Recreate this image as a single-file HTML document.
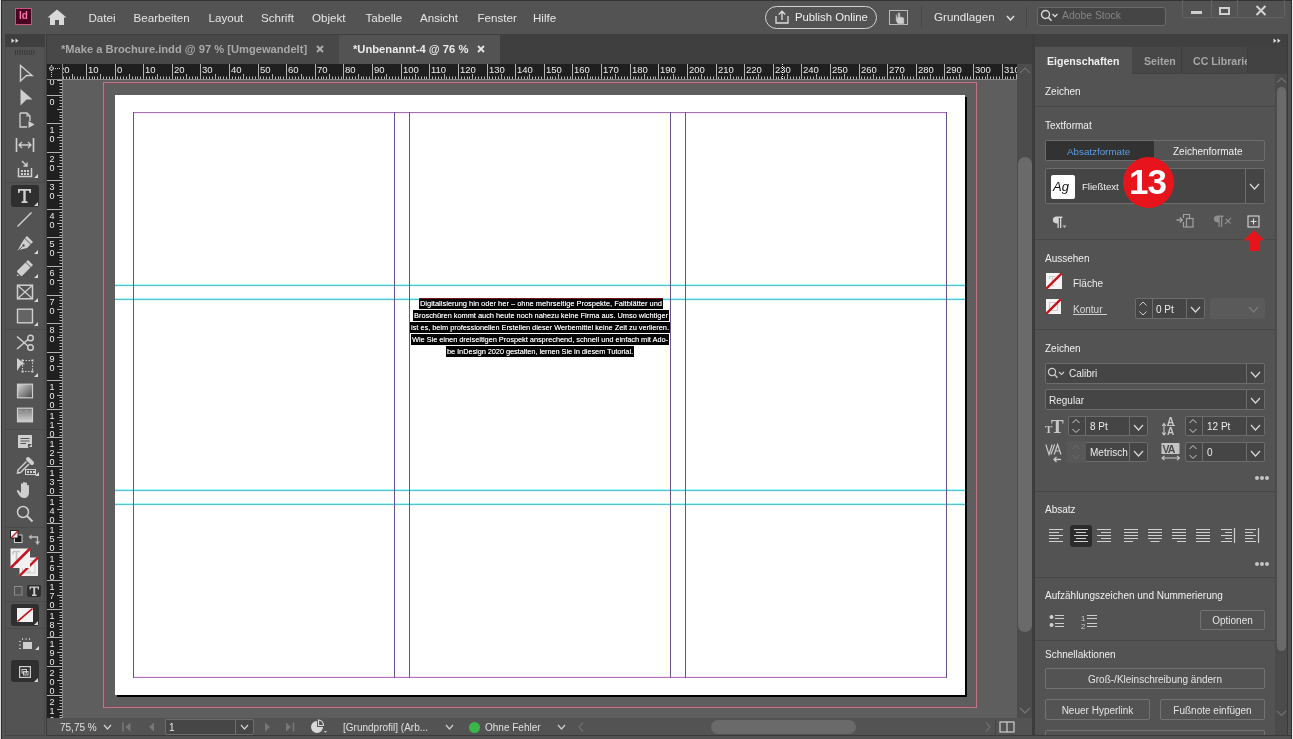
<!DOCTYPE html>
<html><head><meta charset="utf-8"><style>
*{box-sizing:border-box}
html,body{margin:0;padding:0}
body{width:1293px;height:739px;overflow:hidden;position:relative;will-change:transform;background:#535353;font-family:"Liberation Sans",sans-serif;color:#e8e8e8}
.a{position:absolute;display:block}
.t{position:absolute;white-space:nowrap;line-height:1}
.mi{position:absolute;top:11px;font-size:11.6px;color:#e6e6e6;white-space:nowrap;line-height:14px}
.sep{position:absolute;height:1px;background:#474747}
.lab{position:absolute;font-size:10px;color:#f0f0f0;white-space:nowrap;line-height:12px}
.fld{position:absolute;background:#454545;border:1px solid #6c6c6c;border-radius:2px}
.btn{position:absolute;border:1px solid #737373;border-radius:2px;font-size:10px;color:#e4e4e4;text-align:center;white-space:nowrap;padding-top:1px}
.chev{position:absolute}
</style></head>
<body>
<div class="a" style="left:0;top:0;width:1293px;height:34px;background:#535353"></div>
<div class="a" style="left:0;top:0;width:1293px;height:1px;background:#333"></div>
<div class="a" style="left:15px;top:8px;width:17px;height:17px;background:#49021f;border:1px solid #c9557f"></div>
<div class="t" style="left:19px;top:11px;font-size:10px;font-weight:bold;color:#ff77a8">Id</div>
<svg class="a" style="left:47px;top:9px" width="20" height="17" viewBox="0 0 20 17"><path d="M10 0.5 L19.5 8.5 L17 8.5 L17 16 L12 16 L12 11 L8 11 L8 16 L3 16 L3 8.5 L0.5 8.5 Z" fill="#d9d9d9"/></svg>
<div class="mi" style="left:88.5px">Datei</div>
<div class="mi" style="left:133.5px">Bearbeiten</div>
<div class="mi" style="left:208.5px">Layout</div>
<div class="mi" style="left:261px">Schrift</div>
<div class="mi" style="left:312px">Objekt</div>
<div class="mi" style="left:365.5px">Tabelle</div>
<div class="mi" style="left:420px">Ansicht</div>
<div class="mi" style="left:477.5px">Fenster</div>
<div class="mi" style="left:533px">Hilfe</div>
<div class="a" style="left:765px;top:6px;width:112px;height:23px;border:1.5px solid #d4d4d4;border-radius:12px"></div>
<svg class="a" style="left:775px;top:10px" width="14" height="14"><path d="M1 6V13H13V6" fill="none" stroke="#ddd" stroke-width="1.3"/><path d="M7 10V1.5M3.8 4.5L7 1.2L10.2 4.5" fill="none" stroke="#ddd" stroke-width="1.3"/></svg>
<div class="t" style="left:795px;top:12px;font-size:11.3px;color:#f0f0f0">Publish Online</div>
<svg class="a" style="left:889px;top:10px" width="19" height="15"><rect x="0.5" y="0.5" width="18" height="14" fill="none" stroke="#bbb"/><path d="M7 4V11L9 14H15V8L13 7L11 7V3.5C11 2.5 9 2.5 9 3.5V8" fill="#cfcfcf" stroke="#8a8a8a" stroke-width="0.6"/></svg>
<div class="a" style="left:921px;top:6px;width:1px;height:22px;background:#474747"></div>
<div class="t" style="left:934px;top:11px;font-size:11.6px;color:#e6e6e6">Grundlagen</div>
<svg class="a" style="left:1006px;top:15px" width="9" height="6"><path d="M1 1L4.5 5L8 1" fill="none" stroke="#e0e0e0" stroke-width="1.5"/></svg>
<div class="a" style="left:1026px;top:7px;width:1px;height:21px;background:#474747"></div>
<div class="a" style="left:1037px;top:7px;width:129px;height:19px;background:#454545;border:1px solid #6a6a6a;border-radius:3px"></div>
<svg class="a" style="left:1040px;top:9px" width="22" height="14"><circle cx="5.5" cy="5.5" r="4" fill="none" stroke="#d8d8d8" stroke-width="1.4"/><path d="M8.5 8.5L11.5 11.8" stroke="#d8d8d8" stroke-width="1.6"/><path d="M12.5 5L15 7.5L17.5 5" fill="none" stroke="#d8d8d8" stroke-width="1.3"/></svg>
<div class="t" style="left:1062px;top:11px;font-size:10.4px;color:#858585">Adobe Stock</div>
<div class="a" style="left:1182px;top:-2px;width:103px;height:20px;border:1px solid #636363;border-radius:3px"></div>
<div class="a" style="left:1211px;top:0;width:1px;height:18px;background:#636363"></div>
<div class="a" style="left:1237px;top:0;width:1px;height:18px;background:#636363"></div>
<div class="a" style="left:1191px;top:11px;width:11px;height:3px;background:#cfcfcf"></div>
<div class="a" style="left:1219px;top:7px;width:11px;height:8px;border:2px solid #cfcfcf"></div>
<svg class="a" style="left:1255px;top:5px" width="12" height="11"><path d="M1.5 1L10.5 10M10.5 1L1.5 10" stroke="#d4d4d4" stroke-width="2"/></svg>
<div class="a" style="left:2px;top:34px;width:44px;height:702px;background:#535353"></div>
<div class="a" style="left:5px;top:34px;width:40px;height:13px;background:#3f3f3f"></div>
<svg class="a" style="left:11px;top:38px" width="9" height="6"><path d="M0.5 0.5L3.5 2.75L0.5 5ZM4.5 0.5L7.5 2.75L4.5 5Z" fill="#dcdcdc"/></svg>
<div class="a" style="left:5px;top:47px;width:40px;height:689px;border-left:1px solid #4a4a4a;border-right:1px solid #4a4a4a;border-bottom:1px solid #444"></div>
<svg class="a" style="left:14px;top:50px" width="22" height="5"><path d="M1.5 0V5" stroke="#3a3a3a" stroke-width="1"/><path d="M3.8 0V5" stroke="#3a3a3a" stroke-width="1"/><path d="M6.1 0V5" stroke="#3a3a3a" stroke-width="1"/><path d="M8.399999999999999 0V5" stroke="#3a3a3a" stroke-width="1"/><path d="M10.7 0V5" stroke="#3a3a3a" stroke-width="1"/><path d="M13.0 0V5" stroke="#3a3a3a" stroke-width="1"/><path d="M15.299999999999999 0V5" stroke="#3a3a3a" stroke-width="1"/><path d="M17.599999999999998 0V5" stroke="#3a3a3a" stroke-width="1"/><path d="M19.9 0V5" stroke="#3a3a3a" stroke-width="1"/></svg>
<svg class="a" style="left:19px;top:64px" width="15" height="19"><path d="M1.5 1.5L13 11.5L7.5 11.5L1.5 17Z" fill="none" stroke="#cfcfcf" stroke-width="1.4" stroke-linejoin="miter"/></svg>
<svg class="a" style="left:19px;top:88px" width="15" height="19"><path d="M1.5 1L13.5 11.5L7.5 11.5L1.5 17.5Z" fill="#cfcfcf"/></svg>
<svg class="a" style="left:19px;top:112px" width="16" height="17"><path d="M1 1H8L11 4V9M1 1V15H8" fill="none" stroke="#cfcfcf" stroke-width="1.3"/><path d="M8 1V4H11" fill="none" stroke="#cfcfcf" stroke-width="1.1"/><path d="M9.5 9L15.5 12.5L9.5 16Z" fill="#cfcfcf"/></svg>
<svg class="a" style="left:15px;top:137px" width="20" height="16"><path d="M1.5 1V15M18.5 1V15" stroke="#cfcfcf" stroke-width="1.6"/><path d="M4 8H16M7 5L4 8L7 11M13 5L16 8L13 11" fill="none" stroke="#cfcfcf" stroke-width="1.3"/></svg>
<svg class="a" style="left:17px;top:160px" width="16" height="18"><path d="M5 1L10 6M10 2.5V6H6.5" fill="none" stroke="#cfcfcf" stroke-width="1.4"/><path d="M1.5 8V16.5H14.5V8" fill="none" stroke="#cfcfcf" stroke-width="1.5"/><rect x="4" y="10" width="2" height="2" fill="#cfcfcf"/><rect x="7" y="10" width="2" height="2" fill="#cfcfcf"/><rect x="10" y="10" width="2" height="2" fill="#cfcfcf"/><rect x="4" y="13" width="2" height="2" fill="#cfcfcf"/><rect x="7" y="13" width="2" height="2" fill="#cfcfcf"/><rect x="10" y="13" width="2" height="2" fill="#cfcfcf"/></svg>
<svg class="a" style="left:34px;top:174px" width="4" height="4"><path d="M4 0V4H0Z" fill="#d8d8d8"/></svg>
<div class="a" style="left:6px;top:182px;width:38px;height:1px;background:#4a4a4a"></div>
<div class="a" style="left:11px;top:185px;width:28px;height:22px;background:#2f2f2f;border-radius:3px"></div>
<svg class="a" style="left:17px;top:188px" width="15" height="16"><path d="M1 1H14V5H12.5L12 2.8H8.7V13.2H10.5V15H4.5V13.2H6.3V2.8H3L2.5 5H1Z" fill="#cfcfcf"/></svg>
<svg class="a" style="left:34px;top:202px" width="4" height="4"><path d="M4 0V4H0Z" fill="#d8d8d8"/></svg>
<svg class="a" style="left:16px;top:211px" width="17" height="17"><path d="M1.5 15.5L15.5 1.5" stroke="#cfcfcf" stroke-width="1.5"/></svg>
<svg class="a" style="left:16px;top:235px" width="18" height="18"><path d="M11 1L17 7L15 9L9 3Z" fill="#cfcfcf"/><path d="M8.5 3.5L14.5 9.5L11 13L3 15L1 17L5 9Z" fill="#cfcfcf"/><path d="M1 17L6.5 11.5" stroke="#535353" stroke-width="1"/><circle cx="7.5" cy="10.5" r="1.2" fill="#535353"/></svg>
<svg class="a" style="left:34px;top:250px" width="4" height="4"><path d="M4 0V4H0Z" fill="#d8d8d8"/></svg>
<svg class="a" style="left:16px;top:259px" width="18" height="18"><path d="M12 1L17 6L15 8L10 3Z" fill="#cfcfcf"/><path d="M9.5 3.5L14.5 8.5L6 17H1V12Z" fill="#cfcfcf"/><path d="M1 13V17H5Z" fill="#535353"/><path d="M1 15V17H3Z" fill="#cfcfcf"/></svg>
<svg class="a" style="left:34px;top:274px" width="4" height="4"><path d="M4 0V4H0Z" fill="#d8d8d8"/></svg>
<svg class="a" style="left:16px;top:284px" width="18" height="16"><rect x="1.5" y="1.2" width="15" height="13.6" fill="none" stroke="#cfcfcf" stroke-width="1.5"/><path d="M1.5 1.2L16.5 14.8M16.5 1.2L1.5 14.8" stroke="#cfcfcf" stroke-width="1.2"/></svg>
<svg class="a" style="left:34px;top:298px" width="4" height="4"><path d="M4 0V4H0Z" fill="#d8d8d8"/></svg>
<svg class="a" style="left:16px;top:308px" width="18" height="16"><rect x="1.5" y="1.2" width="15" height="13.6" fill="#646464" stroke="#cfcfcf" stroke-width="1.4"/></svg>
<svg class="a" style="left:34px;top:322px" width="4" height="4"><path d="M4 0V4H0Z" fill="#d8d8d8"/></svg>
<div class="a" style="left:6px;top:329px;width:38px;height:1px;background:#4a4a4a"></div>
<svg class="a" style="left:16px;top:334px" width="19" height="18"><circle cx="14.5" cy="4" r="2.8" fill="none" stroke="#cfcfcf" stroke-width="1.4"/><circle cx="14.5" cy="13.5" r="2.8" fill="none" stroke="#cfcfcf" stroke-width="1.4"/><path d="M1 2.5L12 12M1 15L12 5.5" stroke="#cfcfcf" stroke-width="1.6"/></svg>
<svg class="a" style="left:16px;top:357px" width="19" height="18"><path d="M1 1L9 7L5 8L1 14Z" fill="#cfcfcf"/><rect x="6.5" y="3.5" width="10" height="11" fill="none" stroke="#cfcfcf" stroke-width="1" stroke-dasharray="1.5 1.5"/><rect x="5.5" y="2.5" width="2" height="2" fill="#cfcfcf"/><rect x="15.5" y="2.5" width="2" height="2" fill="#cfcfcf"/><rect x="5.5" y="13.5" width="2" height="2" fill="#cfcfcf"/><rect x="15.5" y="13.5" width="2" height="2" fill="#cfcfcf"/></svg>
<svg class="a" style="left:34px;top:373px" width="4" height="4"><path d="M4 0V4H0Z" fill="#d8d8d8"/></svg>
<svg class="a" style="left:16px;top:383px" width="18" height="16"><defs><linearGradient id="g1" x1="0" y1="0" x2="1" y2="1"><stop offset="0" stop-color="#d8d8d8"/><stop offset="1" stop-color="#444"/></linearGradient></defs><rect x="1.5" y="1.2" width="15" height="13.6" fill="url(#g1)" stroke="#cfcfcf" stroke-width="1.2"/></svg>
<svg class="a" style="left:16px;top:407px" width="18" height="16"><defs><linearGradient id="g2" x1="0" y1="0" x2="0" y2="1"><stop offset="0" stop-color="#777"/><stop offset="1" stop-color="#d0d0d0"/></linearGradient></defs><rect x="1.5" y="1.2" width="15" height="13.6" fill="url(#g2)" stroke="#cfcfcf" stroke-width="1.2"/><rect x="3" y="3" width="3" height="2" fill="#999"/><rect x="9" y="3" width="3" height="2" fill="#999"/><rect x="6" y="5" width="3" height="2" fill="#999"/><rect x="12" y="5" width="3" height="2" fill="#999"/></svg>
<div class="a" style="left:6px;top:429px;width:38px;height:1px;background:#4a4a4a"></div>
<svg class="a" style="left:17px;top:434px" width="16" height="16"><path d="M1 1H15V10L11 14H1Z" fill="#cfcfcf"/><path d="M3.5 4.5H12.5M3.5 7H12.5M3.5 9.5H9" stroke="#535353" stroke-width="1.2"/><path d="M11 14L15 10H11Z" fill="#535353"/><path d="M12 13L15 10V13Z" fill="#cfcfcf"/></svg>
<svg class="a" style="left:16px;top:456px" width="22" height="21"><path d="M12 3L16 7" stroke="#cfcfcf" stroke-width="4" stroke-linecap="round"/><path d="M10.5 5.5L2 14L1.5 17L4.5 16.5L13 8" fill="none" stroke="#cfcfcf" stroke-width="1.5"/><rect x="9.5" y="13.5" width="10" height="5" fill="none" stroke="#cfcfcf" stroke-width="1"/><rect x="11" y="15" width="2" height="2" fill="#cfcfcf"/><rect x="14" y="15" width="2" height="2" fill="#cfcfcf"/><rect x="17" y="15" width="2" height="2" fill="#cfcfcf"/></svg>
<svg class="a" style="left:35px;top:472px" width="4" height="4"><path d="M4 0V4H0Z" fill="#d8d8d8"/></svg>
<svg class="a" style="left:16px;top:481px" width="18" height="18"><path d="M5 9V3.2C5 2 7 2 7 3.2V8V1.8C7 0.6 9 0.6 9 1.8V8V2.5C9 1.3 11 1.3 11 2.5V8.5V5C11 3.8 13 3.8 13 5V11C13 15 11 17 8 17C5.5 17 4.5 16 3 14L1 10.5C0.5 9.5 1.8 8.6 2.6 9.4L5 12Z" fill="#cfcfcf"/></svg>
<svg class="a" style="left:16px;top:505px" width="18" height="18"><circle cx="7" cy="7" r="5.5" fill="none" stroke="#cfcfcf" stroke-width="1.5"/><path d="M11 11L16.5 16.5" stroke="#cfcfcf" stroke-width="2"/></svg>
<div class="a" style="left:6px;top:527px;width:38px;height:1px;background:#4a4a4a"></div>
<svg class="a" style="left:10px;top:530px" width="13" height="14"><rect x="4.5" y="5" width="7.5" height="7.5" fill="#1a1a1a" stroke="#d0d0d0" stroke-width="1"/><rect x="0.5" y="0.5" width="7.5" height="7.5" fill="#f0f0f0" stroke="#222" stroke-width="1"/><path d="M1 8L8 1" stroke="#c8141c" stroke-width="1.2"/></svg>
<svg class="a" style="left:28px;top:533px" width="13" height="13"><path d="M2.5 4H9.5V10" fill="none" stroke="#bdbdbd" stroke-width="1.3"/><path d="M0.5 4L3.5 1.5V6.5Z" fill="#bdbdbd"/><path d="M7 8.5L9.5 12L12 8.5Z" fill="#bdbdbd"/></svg>
<svg class="a" style="left:19px;top:557px" width="20" height="20"><rect x="0.5" y="0.5" width="18.5" height="18.5" fill="#f2f2f2"/><rect x="3.5" y="3.5" width="12.5" height="12.5" fill="none" stroke="#cfcfcf" stroke-width="1"/><path d="M10 12V15M8 15H12" stroke="#cdcdcd" stroke-width="1"/><path d="M0.5 19L19 0.5" stroke="#c8141c" stroke-width="2.4"/></svg>
<svg class="a" style="left:10px;top:548px" width="21" height="21"><rect x="0.5" y="0.5" width="19.5" height="19.5" fill="#f2f2f2"/><path d="M3 3.5H10M3 3.5V6.5M6.5 3.5V15M5 15H8" fill="none" stroke="#c4c4c4" stroke-width="1.6"/><path d="M0.5 20L20 0.5" stroke="#c8141c" stroke-width="2.6"/></svg>
<svg class="a" style="left:14px;top:586px" width="9" height="10"><rect x="0.5" y="0.5" width="7.5" height="8.5" fill="none" stroke="#8a8a8a" stroke-width="1"/></svg>
<div class="a" style="left:27px;top:585px;width:14px;height:12px;background:#2f2f2f;border-radius:2px"></div>
<svg class="a" style="left:29px;top:586px" width="11" height="11"><path d="M0.5 0.5H10V3.5H9L8.6 1.8H6.2V8.6H7.5V10H3V8.6H4.3V1.8H2L1.5 3.5H0.5Z" fill="#cfcfcf"/></svg>
<div class="a" style="left:6px;top:601px;width:38px;height:1px;background:#4a4a4a"></div>
<div class="a" style="left:11px;top:604px;width:28px;height:22px;background:#2f2f2f;border-radius:3px"></div>
<svg class="a" style="left:17px;top:608px" width="16" height="14"><rect x="0" y="0" width="16" height="14" fill="#f2f2f2"/><path d="M0.5 13.5L15.5 0.5" stroke="#c8141c" stroke-width="1.6"/></svg>
<svg class="a" style="left:34px;top:621px" width="4" height="4"><path d="M4 0V4H0Z" fill="#d8d8d8"/></svg>
<div class="a" style="left:6px;top:628px;width:38px;height:1px;background:#4a4a4a"></div>
<svg class="a" style="left:18px;top:637px" width="15" height="13"><path d="M4.5 1V3M8 1V3M11.5 1V3M1 4.5H3M1 8H3M1 11.5H3" stroke="#bdbdbd" stroke-width="1"/><rect x="5" y="5" width="9" height="7" fill="#cfcfcf"/></svg>
<svg class="a" style="left:35px;top:646px" width="4" height="4"><path d="M4 0V4H0Z" fill="#d8d8d8"/></svg>
<div class="a" style="left:11px;top:660px;width:28px;height:22px;background:#2f2f2f;border-radius:3px"></div>
<svg class="a" style="left:19px;top:666px" width="12" height="12"><rect x="0.6" y="0.6" width="10.8" height="10.8" fill="none" stroke="#cfcfcf" stroke-width="1.2"/><rect x="3" y="3.5" width="4.5" height="3.5" fill="none" stroke="#cfcfcf" stroke-width="1"/><rect x="4.5" y="5.5" width="4.5" height="3.5" fill="none" stroke="#cfcfcf" stroke-width="1"/></svg>
<svg class="a" style="left:34px;top:678px" width="4" height="4"><path d="M4 0V4H0Z" fill="#d8d8d8"/></svg>
<div class="a" style="left:46px;top:34px;width:986px;height:30px;background:#3f3f3f"></div>
<div class="a" style="left:46px;top:34px;width:1px;height:702px;background:#3a3a3a"></div>
<div class="a" style="left:47px;top:35px;width:292px;height:29px;background:#484848"></div>
<div class="t" style="left:61px;top:44px;font-size:11.15px;font-weight:bold;color:#a9a9a9">*Make a Brochure.indd @ 97 % [Umgewandelt]</div>
<svg class="a" style="left:316px;top:45px" width="8" height="8"><path d="M1 1L7 7M7 1L1 7" stroke="#b0b0b0" stroke-width="1.8"/></svg>
<div class="a" style="left:339px;top:35px;width:161px;height:29px;background:#535353"></div>
<div class="t" style="left:353px;top:44px;font-size:11.2px;font-weight:bold;color:#ececec">*Unbenannt-4 @ 76 %</div>
<svg class="a" style="left:477px;top:45px" width="8" height="8"><path d="M1 1L7 7M7 1L1 7" stroke="#e6e6e6" stroke-width="1.8"/></svg>
<div class="a" style="left:47px;top:64px;width:970px;height:15px;background:#1f1f1f"></div>
<div class="a" style="left:47px;top:79px;width:15px;height:639px;background:#1f1f1f"></div>
<svg class="a" width="955" height="15" style="left:62px;top:64px"><path d="M-4.5 0V15" stroke="#b4b4b4"/><text x="-3.0" y="9" fill="#ececec" font-size="9.5" font-family="Liberation Sans">20</text><path d="M-1.5 12.5V15" stroke="#b4b4b4"/><path d="M1.5 12.5V15" stroke="#b4b4b4"/><path d="M4.5 12.5V15" stroke="#b4b4b4"/><path d="M7.5 12.5V15" stroke="#b4b4b4"/><path d="M10.5 10V15" stroke="#b4b4b4"/><path d="M12.5 12.5V15" stroke="#b4b4b4"/><path d="M15.5 12.5V15" stroke="#b4b4b4"/><path d="M18.5 12.5V15" stroke="#b4b4b4"/><path d="M21.5 12.5V15" stroke="#b4b4b4"/><path d="M24.5 0V15" stroke="#b4b4b4"/><text x="26.0" y="9" fill="#ececec" font-size="9.5" font-family="Liberation Sans">10</text><path d="M27.5 12.5V15" stroke="#b4b4b4"/><path d="M30.5 12.5V15" stroke="#b4b4b4"/><path d="M32.5 12.5V15" stroke="#b4b4b4"/><path d="M35.5 12.5V15" stroke="#b4b4b4"/><path d="M38.5 10V15" stroke="#b4b4b4"/><path d="M41.5 12.5V15" stroke="#b4b4b4"/><path d="M44.5 12.5V15" stroke="#b4b4b4"/><path d="M47.5 12.5V15" stroke="#b4b4b4"/><path d="M50.5 12.5V15" stroke="#b4b4b4"/><path d="M53.5 0V15" stroke="#b4b4b4"/><text x="55.0" y="9" fill="#ececec" font-size="9.5" font-family="Liberation Sans">0</text><path d="M55.5 12.5V15" stroke="#b4b4b4"/><path d="M58.5 12.5V15" stroke="#b4b4b4"/><path d="M61.5 12.5V15" stroke="#b4b4b4"/><path d="M64.5 12.5V15" stroke="#b4b4b4"/><path d="M67.5 10V15" stroke="#b4b4b4"/><path d="M70.5 12.5V15" stroke="#b4b4b4"/><path d="M73.5 12.5V15" stroke="#b4b4b4"/><path d="M75.5 12.5V15" stroke="#b4b4b4"/><path d="M78.5 12.5V15" stroke="#b4b4b4"/><path d="M81.5 0V15" stroke="#b4b4b4"/><text x="83.0" y="9" fill="#ececec" font-size="9.5" font-family="Liberation Sans">10</text><path d="M84.5 12.5V15" stroke="#b4b4b4"/><path d="M87.5 12.5V15" stroke="#b4b4b4"/><path d="M90.5 12.5V15" stroke="#b4b4b4"/><path d="M93.5 12.5V15" stroke="#b4b4b4"/><path d="M95.5 10V15" stroke="#b4b4b4"/><path d="M98.5 12.5V15" stroke="#b4b4b4"/><path d="M101.5 12.5V15" stroke="#b4b4b4"/><path d="M104.5 12.5V15" stroke="#b4b4b4"/><path d="M107.5 12.5V15" stroke="#b4b4b4"/><path d="M110.5 0V15" stroke="#b4b4b4"/><text x="112.0" y="9" fill="#ececec" font-size="9.5" font-family="Liberation Sans">20</text><path d="M113.5 12.5V15" stroke="#b4b4b4"/><path d="M115.5 12.5V15" stroke="#b4b4b4"/><path d="M118.5 12.5V15" stroke="#b4b4b4"/><path d="M121.5 12.5V15" stroke="#b4b4b4"/><path d="M124.5 10V15" stroke="#b4b4b4"/><path d="M127.5 12.5V15" stroke="#b4b4b4"/><path d="M130.5 12.5V15" stroke="#b4b4b4"/><path d="M133.5 12.5V15" stroke="#b4b4b4"/><path d="M135.5 12.5V15" stroke="#b4b4b4"/><path d="M138.5 0V15" stroke="#b4b4b4"/><text x="140.0" y="9" fill="#ececec" font-size="9.5" font-family="Liberation Sans">30</text><path d="M141.5 12.5V15" stroke="#b4b4b4"/><path d="M144.5 12.5V15" stroke="#b4b4b4"/><path d="M147.5 12.5V15" stroke="#b4b4b4"/><path d="M150.5 12.5V15" stroke="#b4b4b4"/><path d="M153.5 10V15" stroke="#b4b4b4"/><path d="M156.5 12.5V15" stroke="#b4b4b4"/><path d="M158.5 12.5V15" stroke="#b4b4b4"/><path d="M161.5 12.5V15" stroke="#b4b4b4"/><path d="M164.5 12.5V15" stroke="#b4b4b4"/><path d="M167.5 0V15" stroke="#b4b4b4"/><text x="169.0" y="9" fill="#ececec" font-size="9.5" font-family="Liberation Sans">40</text><path d="M170.5 12.5V15" stroke="#b4b4b4"/><path d="M173.5 12.5V15" stroke="#b4b4b4"/><path d="M176.5 12.5V15" stroke="#b4b4b4"/><path d="M178.5 12.5V15" stroke="#b4b4b4"/><path d="M181.5 10V15" stroke="#b4b4b4"/><path d="M184.5 12.5V15" stroke="#b4b4b4"/><path d="M187.5 12.5V15" stroke="#b4b4b4"/><path d="M190.5 12.5V15" stroke="#b4b4b4"/><path d="M193.5 12.5V15" stroke="#b4b4b4"/><path d="M196.5 0V15" stroke="#b4b4b4"/><text x="198.0" y="9" fill="#ececec" font-size="9.5" font-family="Liberation Sans">50</text><path d="M198.5 12.5V15" stroke="#b4b4b4"/><path d="M201.5 12.5V15" stroke="#b4b4b4"/><path d="M204.5 12.5V15" stroke="#b4b4b4"/><path d="M207.5 12.5V15" stroke="#b4b4b4"/><path d="M210.5 10V15" stroke="#b4b4b4"/><path d="M213.5 12.5V15" stroke="#b4b4b4"/><path d="M216.5 12.5V15" stroke="#b4b4b4"/><path d="M218.5 12.5V15" stroke="#b4b4b4"/><path d="M221.5 12.5V15" stroke="#b4b4b4"/><path d="M224.5 0V15" stroke="#b4b4b4"/><text x="226.0" y="9" fill="#ececec" font-size="9.5" font-family="Liberation Sans">60</text><path d="M227.5 12.5V15" stroke="#b4b4b4"/><path d="M230.5 12.5V15" stroke="#b4b4b4"/><path d="M233.5 12.5V15" stroke="#b4b4b4"/><path d="M236.5 12.5V15" stroke="#b4b4b4"/><path d="M239.5 10V15" stroke="#b4b4b4"/><path d="M241.5 12.5V15" stroke="#b4b4b4"/><path d="M244.5 12.5V15" stroke="#b4b4b4"/><path d="M247.5 12.5V15" stroke="#b4b4b4"/><path d="M250.5 12.5V15" stroke="#b4b4b4"/><path d="M253.5 0V15" stroke="#b4b4b4"/><text x="255.0" y="9" fill="#ececec" font-size="9.5" font-family="Liberation Sans">70</text><path d="M256.5 12.5V15" stroke="#b4b4b4"/><path d="M259.5 12.5V15" stroke="#b4b4b4"/><path d="M261.5 12.5V15" stroke="#b4b4b4"/><path d="M264.5 12.5V15" stroke="#b4b4b4"/><path d="M267.5 10V15" stroke="#b4b4b4"/><path d="M270.5 12.5V15" stroke="#b4b4b4"/><path d="M273.5 12.5V15" stroke="#b4b4b4"/><path d="M276.5 12.5V15" stroke="#b4b4b4"/><path d="M279.5 12.5V15" stroke="#b4b4b4"/><path d="M281.5 0V15" stroke="#b4b4b4"/><text x="283.0" y="9" fill="#ececec" font-size="9.5" font-family="Liberation Sans">80</text><path d="M284.5 12.5V15" stroke="#b4b4b4"/><path d="M287.5 12.5V15" stroke="#b4b4b4"/><path d="M290.5 12.5V15" stroke="#b4b4b4"/><path d="M293.5 12.5V15" stroke="#b4b4b4"/><path d="M296.5 10V15" stroke="#b4b4b4"/><path d="M299.5 12.5V15" stroke="#b4b4b4"/><path d="M301.5 12.5V15" stroke="#b4b4b4"/><path d="M304.5 12.5V15" stroke="#b4b4b4"/><path d="M307.5 12.5V15" stroke="#b4b4b4"/><path d="M310.5 0V15" stroke="#b4b4b4"/><text x="312.0" y="9" fill="#ececec" font-size="9.5" font-family="Liberation Sans">90</text><path d="M313.5 12.5V15" stroke="#b4b4b4"/><path d="M316.5 12.5V15" stroke="#b4b4b4"/><path d="M319.5 12.5V15" stroke="#b4b4b4"/><path d="M322.5 12.5V15" stroke="#b4b4b4"/><path d="M324.5 10V15" stroke="#b4b4b4"/><path d="M327.5 12.5V15" stroke="#b4b4b4"/><path d="M330.5 12.5V15" stroke="#b4b4b4"/><path d="M333.5 12.5V15" stroke="#b4b4b4"/><path d="M336.5 12.5V15" stroke="#b4b4b4"/><path d="M339.5 0V15" stroke="#b4b4b4"/><text x="341.0" y="9" fill="#ececec" font-size="9.5" font-family="Liberation Sans">100</text><path d="M342.5 12.5V15" stroke="#b4b4b4"/><path d="M344.5 12.5V15" stroke="#b4b4b4"/><path d="M347.5 12.5V15" stroke="#b4b4b4"/><path d="M350.5 12.5V15" stroke="#b4b4b4"/><path d="M353.5 10V15" stroke="#b4b4b4"/><path d="M356.5 12.5V15" stroke="#b4b4b4"/><path d="M359.5 12.5V15" stroke="#b4b4b4"/><path d="M362.5 12.5V15" stroke="#b4b4b4"/><path d="M364.5 12.5V15" stroke="#b4b4b4"/><path d="M367.5 0V15" stroke="#b4b4b4"/><text x="369.0" y="9" fill="#ececec" font-size="9.5" font-family="Liberation Sans">110</text><path d="M370.5 12.5V15" stroke="#b4b4b4"/><path d="M373.5 12.5V15" stroke="#b4b4b4"/><path d="M376.5 12.5V15" stroke="#b4b4b4"/><path d="M379.5 12.5V15" stroke="#b4b4b4"/><path d="M382.5 10V15" stroke="#b4b4b4"/><path d="M384.5 12.5V15" stroke="#b4b4b4"/><path d="M387.5 12.5V15" stroke="#b4b4b4"/><path d="M390.5 12.5V15" stroke="#b4b4b4"/><path d="M393.5 12.5V15" stroke="#b4b4b4"/><path d="M396.5 0V15" stroke="#b4b4b4"/><text x="398.0" y="9" fill="#ececec" font-size="9.5" font-family="Liberation Sans">120</text><path d="M399.5 12.5V15" stroke="#b4b4b4"/><path d="M402.5 12.5V15" stroke="#b4b4b4"/><path d="M405.5 12.5V15" stroke="#b4b4b4"/><path d="M407.5 12.5V15" stroke="#b4b4b4"/><path d="M410.5 10V15" stroke="#b4b4b4"/><path d="M413.5 12.5V15" stroke="#b4b4b4"/><path d="M416.5 12.5V15" stroke="#b4b4b4"/><path d="M419.5 12.5V15" stroke="#b4b4b4"/><path d="M422.5 12.5V15" stroke="#b4b4b4"/><path d="M425.5 0V15" stroke="#b4b4b4"/><text x="427.0" y="9" fill="#ececec" font-size="9.5" font-family="Liberation Sans">130</text><path d="M427.5 12.5V15" stroke="#b4b4b4"/><path d="M430.5 12.5V15" stroke="#b4b4b4"/><path d="M433.5 12.5V15" stroke="#b4b4b4"/><path d="M436.5 12.5V15" stroke="#b4b4b4"/><path d="M439.5 10V15" stroke="#b4b4b4"/><path d="M442.5 12.5V15" stroke="#b4b4b4"/><path d="M445.5 12.5V15" stroke="#b4b4b4"/><path d="M447.5 12.5V15" stroke="#b4b4b4"/><path d="M450.5 12.5V15" stroke="#b4b4b4"/><path d="M453.5 0V15" stroke="#b4b4b4"/><text x="455.0" y="9" fill="#ececec" font-size="9.5" font-family="Liberation Sans">140</text><path d="M456.5 12.5V15" stroke="#b4b4b4"/><path d="M459.5 12.5V15" stroke="#b4b4b4"/><path d="M462.5 12.5V15" stroke="#b4b4b4"/><path d="M465.5 12.5V15" stroke="#b4b4b4"/><path d="M467.5 10V15" stroke="#b4b4b4"/><path d="M470.5 12.5V15" stroke="#b4b4b4"/><path d="M473.5 12.5V15" stroke="#b4b4b4"/><path d="M476.5 12.5V15" stroke="#b4b4b4"/><path d="M479.5 12.5V15" stroke="#b4b4b4"/><path d="M482.5 0V15" stroke="#b4b4b4"/><text x="484.0" y="9" fill="#ececec" font-size="9.5" font-family="Liberation Sans">150</text><path d="M485.5 12.5V15" stroke="#b4b4b4"/><path d="M488.5 12.5V15" stroke="#b4b4b4"/><path d="M490.5 12.5V15" stroke="#b4b4b4"/><path d="M493.5 12.5V15" stroke="#b4b4b4"/><path d="M496.5 10V15" stroke="#b4b4b4"/><path d="M499.5 12.5V15" stroke="#b4b4b4"/><path d="M502.5 12.5V15" stroke="#b4b4b4"/><path d="M505.5 12.5V15" stroke="#b4b4b4"/><path d="M508.5 12.5V15" stroke="#b4b4b4"/><path d="M510.5 0V15" stroke="#b4b4b4"/><text x="512.0" y="9" fill="#ececec" font-size="9.5" font-family="Liberation Sans">160</text><path d="M513.5 12.5V15" stroke="#b4b4b4"/><path d="M516.5 12.5V15" stroke="#b4b4b4"/><path d="M519.5 12.5V15" stroke="#b4b4b4"/><path d="M522.5 12.5V15" stroke="#b4b4b4"/><path d="M525.5 10V15" stroke="#b4b4b4"/><path d="M528.5 12.5V15" stroke="#b4b4b4"/><path d="M530.5 12.5V15" stroke="#b4b4b4"/><path d="M533.5 12.5V15" stroke="#b4b4b4"/><path d="M536.5 12.5V15" stroke="#b4b4b4"/><path d="M539.5 0V15" stroke="#b4b4b4"/><text x="541.0" y="9" fill="#ececec" font-size="9.5" font-family="Liberation Sans">170</text><path d="M542.5 12.5V15" stroke="#b4b4b4"/><path d="M545.5 12.5V15" stroke="#b4b4b4"/><path d="M548.5 12.5V15" stroke="#b4b4b4"/><path d="M550.5 12.5V15" stroke="#b4b4b4"/><path d="M553.5 10V15" stroke="#b4b4b4"/><path d="M556.5 12.5V15" stroke="#b4b4b4"/><path d="M559.5 12.5V15" stroke="#b4b4b4"/><path d="M562.5 12.5V15" stroke="#b4b4b4"/><path d="M565.5 12.5V15" stroke="#b4b4b4"/><path d="M568.5 0V15" stroke="#b4b4b4"/><text x="570.0" y="9" fill="#ececec" font-size="9.5" font-family="Liberation Sans">180</text><path d="M571.5 12.5V15" stroke="#b4b4b4"/><path d="M573.5 12.5V15" stroke="#b4b4b4"/><path d="M576.5 12.5V15" stroke="#b4b4b4"/><path d="M579.5 12.5V15" stroke="#b4b4b4"/><path d="M582.5 10V15" stroke="#b4b4b4"/><path d="M585.5 12.5V15" stroke="#b4b4b4"/><path d="M588.5 12.5V15" stroke="#b4b4b4"/><path d="M591.5 12.5V15" stroke="#b4b4b4"/><path d="M593.5 12.5V15" stroke="#b4b4b4"/><path d="M596.5 0V15" stroke="#b4b4b4"/><text x="598.0" y="9" fill="#ececec" font-size="9.5" font-family="Liberation Sans">190</text><path d="M599.5 12.5V15" stroke="#b4b4b4"/><path d="M602.5 12.5V15" stroke="#b4b4b4"/><path d="M605.5 12.5V15" stroke="#b4b4b4"/><path d="M608.5 12.5V15" stroke="#b4b4b4"/><path d="M611.5 10V15" stroke="#b4b4b4"/><path d="M613.5 12.5V15" stroke="#b4b4b4"/><path d="M616.5 12.5V15" stroke="#b4b4b4"/><path d="M619.5 12.5V15" stroke="#b4b4b4"/><path d="M622.5 12.5V15" stroke="#b4b4b4"/><path d="M625.5 0V15" stroke="#b4b4b4"/><text x="627.0" y="9" fill="#ececec" font-size="9.5" font-family="Liberation Sans">200</text><path d="M628.5 12.5V15" stroke="#b4b4b4"/><path d="M631.5 12.5V15" stroke="#b4b4b4"/><path d="M633.5 12.5V15" stroke="#b4b4b4"/><path d="M636.5 12.5V15" stroke="#b4b4b4"/><path d="M639.5 10V15" stroke="#b4b4b4"/><path d="M642.5 12.5V15" stroke="#b4b4b4"/><path d="M645.5 12.5V15" stroke="#b4b4b4"/><path d="M648.5 12.5V15" stroke="#b4b4b4"/><path d="M651.5 12.5V15" stroke="#b4b4b4"/><path d="M654.5 0V15" stroke="#b4b4b4"/><text x="656.0" y="9" fill="#ececec" font-size="9.5" font-family="Liberation Sans">210</text><path d="M656.5 12.5V15" stroke="#b4b4b4"/><path d="M659.5 12.5V15" stroke="#b4b4b4"/><path d="M662.5 12.5V15" stroke="#b4b4b4"/><path d="M665.5 12.5V15" stroke="#b4b4b4"/><path d="M668.5 10V15" stroke="#b4b4b4"/><path d="M671.5 12.5V15" stroke="#b4b4b4"/><path d="M674.5 12.5V15" stroke="#b4b4b4"/><path d="M676.5 12.5V15" stroke="#b4b4b4"/><path d="M679.5 12.5V15" stroke="#b4b4b4"/><path d="M682.5 0V15" stroke="#b4b4b4"/><text x="684.0" y="9" fill="#ececec" font-size="9.5" font-family="Liberation Sans">220</text><path d="M685.5 12.5V15" stroke="#b4b4b4"/><path d="M688.5 12.5V15" stroke="#b4b4b4"/><path d="M691.5 12.5V15" stroke="#b4b4b4"/><path d="M694.5 12.5V15" stroke="#b4b4b4"/><path d="M696.5 10V15" stroke="#b4b4b4"/><path d="M699.5 12.5V15" stroke="#b4b4b4"/><path d="M702.5 12.5V15" stroke="#b4b4b4"/><path d="M705.5 12.5V15" stroke="#b4b4b4"/><path d="M708.5 12.5V15" stroke="#b4b4b4"/><path d="M711.5 0V15" stroke="#b4b4b4"/><text x="713.0" y="9" fill="#ececec" font-size="9.5" font-family="Liberation Sans">230</text><path d="M714.5 12.5V15" stroke="#b4b4b4"/><path d="M716.5 12.5V15" stroke="#b4b4b4"/><path d="M719.5 12.5V15" stroke="#b4b4b4"/><path d="M722.5 12.5V15" stroke="#b4b4b4"/><path d="M725.5 10V15" stroke="#b4b4b4"/><path d="M728.5 12.5V15" stroke="#b4b4b4"/><path d="M731.5 12.5V15" stroke="#b4b4b4"/><path d="M734.5 12.5V15" stroke="#b4b4b4"/><path d="M737.5 12.5V15" stroke="#b4b4b4"/><path d="M739.5 0V15" stroke="#b4b4b4"/><text x="741.0" y="9" fill="#ececec" font-size="9.5" font-family="Liberation Sans">240</text><path d="M742.5 12.5V15" stroke="#b4b4b4"/><path d="M745.5 12.5V15" stroke="#b4b4b4"/><path d="M748.5 12.5V15" stroke="#b4b4b4"/><path d="M751.5 12.5V15" stroke="#b4b4b4"/><path d="M754.5 10V15" stroke="#b4b4b4"/><path d="M757.5 12.5V15" stroke="#b4b4b4"/><path d="M759.5 12.5V15" stroke="#b4b4b4"/><path d="M762.5 12.5V15" stroke="#b4b4b4"/><path d="M765.5 12.5V15" stroke="#b4b4b4"/><path d="M768.5 0V15" stroke="#b4b4b4"/><text x="770.0" y="9" fill="#ececec" font-size="9.5" font-family="Liberation Sans">250</text><path d="M771.5 12.5V15" stroke="#b4b4b4"/><path d="M774.5 12.5V15" stroke="#b4b4b4"/><path d="M777.5 12.5V15" stroke="#b4b4b4"/><path d="M779.5 12.5V15" stroke="#b4b4b4"/><path d="M782.5 10V15" stroke="#b4b4b4"/><path d="M785.5 12.5V15" stroke="#b4b4b4"/><path d="M788.5 12.5V15" stroke="#b4b4b4"/><path d="M791.5 12.5V15" stroke="#b4b4b4"/><path d="M794.5 12.5V15" stroke="#b4b4b4"/><path d="M797.5 0V15" stroke="#b4b4b4"/><text x="799.0" y="9" fill="#ececec" font-size="9.5" font-family="Liberation Sans">260</text><path d="M799.5 12.5V15" stroke="#b4b4b4"/><path d="M802.5 12.5V15" stroke="#b4b4b4"/><path d="M805.5 12.5V15" stroke="#b4b4b4"/><path d="M808.5 12.5V15" stroke="#b4b4b4"/><path d="M811.5 10V15" stroke="#b4b4b4"/><path d="M814.5 12.5V15" stroke="#b4b4b4"/><path d="M817.5 12.5V15" stroke="#b4b4b4"/><path d="M820.5 12.5V15" stroke="#b4b4b4"/><path d="M822.5 12.5V15" stroke="#b4b4b4"/><path d="M825.5 0V15" stroke="#b4b4b4"/><text x="827.0" y="9" fill="#ececec" font-size="9.5" font-family="Liberation Sans">270</text><path d="M828.5 12.5V15" stroke="#b4b4b4"/><path d="M831.5 12.5V15" stroke="#b4b4b4"/><path d="M834.5 12.5V15" stroke="#b4b4b4"/><path d="M837.5 12.5V15" stroke="#b4b4b4"/><path d="M840.5 10V15" stroke="#b4b4b4"/><path d="M842.5 12.5V15" stroke="#b4b4b4"/><path d="M845.5 12.5V15" stroke="#b4b4b4"/><path d="M848.5 12.5V15" stroke="#b4b4b4"/><path d="M851.5 12.5V15" stroke="#b4b4b4"/><path d="M854.5 0V15" stroke="#b4b4b4"/><text x="856.0" y="9" fill="#ececec" font-size="9.5" font-family="Liberation Sans">280</text><path d="M857.5 12.5V15" stroke="#b4b4b4"/><path d="M860.5 12.5V15" stroke="#b4b4b4"/><path d="M862.5 12.5V15" stroke="#b4b4b4"/><path d="M865.5 12.5V15" stroke="#b4b4b4"/><path d="M868.5 10V15" stroke="#b4b4b4"/><path d="M871.5 12.5V15" stroke="#b4b4b4"/><path d="M874.5 12.5V15" stroke="#b4b4b4"/><path d="M877.5 12.5V15" stroke="#b4b4b4"/><path d="M880.5 12.5V15" stroke="#b4b4b4"/><path d="M882.5 0V15" stroke="#b4b4b4"/><text x="884.0" y="9" fill="#ececec" font-size="9.5" font-family="Liberation Sans">290</text><path d="M885.5 12.5V15" stroke="#b4b4b4"/><path d="M888.5 12.5V15" stroke="#b4b4b4"/><path d="M891.5 12.5V15" stroke="#b4b4b4"/><path d="M894.5 12.5V15" stroke="#b4b4b4"/><path d="M897.5 10V15" stroke="#b4b4b4"/><path d="M900.5 12.5V15" stroke="#b4b4b4"/><path d="M903.5 12.5V15" stroke="#b4b4b4"/><path d="M905.5 12.5V15" stroke="#b4b4b4"/><path d="M908.5 12.5V15" stroke="#b4b4b4"/><path d="M911.5 0V15" stroke="#b4b4b4"/><text x="913.0" y="9" fill="#ececec" font-size="9.5" font-family="Liberation Sans">300</text><path d="M914.5 12.5V15" stroke="#b4b4b4"/><path d="M917.5 12.5V15" stroke="#b4b4b4"/><path d="M920.5 12.5V15" stroke="#b4b4b4"/><path d="M923.5 12.5V15" stroke="#b4b4b4"/><path d="M925.5 10V15" stroke="#b4b4b4"/><path d="M928.5 12.5V15" stroke="#b4b4b4"/><path d="M931.5 12.5V15" stroke="#b4b4b4"/><path d="M934.5 12.5V15" stroke="#b4b4b4"/><path d="M937.5 12.5V15" stroke="#b4b4b4"/><path d="M940.5 0V15" stroke="#b4b4b4"/><text x="942.0" y="9" fill="#ececec" font-size="9.5" font-family="Liberation Sans">310</text><path d="M943.5 12.5V15" stroke="#b4b4b4"/><path d="M945.5 12.5V15" stroke="#b4b4b4"/><path d="M948.5 12.5V15" stroke="#b4b4b4"/><path d="M951.5 12.5V15" stroke="#b4b4b4"/><path d="M954.5 10V15" stroke="#b4b4b4"/></svg>
<svg class="a" width="15" height="639" style="left:47px;top:79px"><path d="M0 -12.5H15" stroke="#b4b4b4"/><text x="2.5" y="-3.0" fill="#ececec" font-size="9" font-family="Liberation Sans">1</text><text x="2.5" y="6.0" fill="#ececec" font-size="9" font-family="Liberation Sans">0</text><path d="M12.5 -9.5H15" stroke="#b4b4b4"/><path d="M12.5 -6.5H15" stroke="#b4b4b4"/><path d="M12.5 -3.5H15" stroke="#b4b4b4"/><path d="M12.5 -1.5H15" stroke="#b4b4b4"/><path d="M10 1.5H15" stroke="#b4b4b4"/><path d="M12.5 4.5H15" stroke="#b4b4b4"/><path d="M12.5 7.5H15" stroke="#b4b4b4"/><path d="M12.5 10.5H15" stroke="#b4b4b4"/><path d="M12.5 13.5H15" stroke="#b4b4b4"/><path d="M0 16.5H15" stroke="#b4b4b4"/><text x="2.5" y="26.0" fill="#ececec" font-size="9" font-family="Liberation Sans">0</text><path d="M12.5 18.5H15" stroke="#b4b4b4"/><path d="M12.5 21.5H15" stroke="#b4b4b4"/><path d="M12.5 24.5H15" stroke="#b4b4b4"/><path d="M12.5 27.5H15" stroke="#b4b4b4"/><path d="M10 30.5H15" stroke="#b4b4b4"/><path d="M12.5 33.5H15" stroke="#b4b4b4"/><path d="M12.5 36.5H15" stroke="#b4b4b4"/><path d="M12.5 38.5H15" stroke="#b4b4b4"/><path d="M12.5 41.5H15" stroke="#b4b4b4"/><path d="M0 44.5H15" stroke="#b4b4b4"/><text x="2.5" y="54.0" fill="#ececec" font-size="9" font-family="Liberation Sans">1</text><text x="2.5" y="63.0" fill="#ececec" font-size="9" font-family="Liberation Sans">0</text><path d="M12.5 47.5H15" stroke="#b4b4b4"/><path d="M12.5 50.5H15" stroke="#b4b4b4"/><path d="M12.5 53.5H15" stroke="#b4b4b4"/><path d="M12.5 56.5H15" stroke="#b4b4b4"/><path d="M10 58.5H15" stroke="#b4b4b4"/><path d="M12.5 61.5H15" stroke="#b4b4b4"/><path d="M12.5 64.5H15" stroke="#b4b4b4"/><path d="M12.5 67.5H15" stroke="#b4b4b4"/><path d="M12.5 70.5H15" stroke="#b4b4b4"/><path d="M0 73.5H15" stroke="#b4b4b4"/><text x="2.5" y="83.0" fill="#ececec" font-size="9" font-family="Liberation Sans">2</text><text x="2.5" y="92.0" fill="#ececec" font-size="9" font-family="Liberation Sans">0</text><path d="M12.5 76.5H15" stroke="#b4b4b4"/><path d="M12.5 78.5H15" stroke="#b4b4b4"/><path d="M12.5 81.5H15" stroke="#b4b4b4"/><path d="M12.5 84.5H15" stroke="#b4b4b4"/><path d="M10 87.5H15" stroke="#b4b4b4"/><path d="M12.5 90.5H15" stroke="#b4b4b4"/><path d="M12.5 93.5H15" stroke="#b4b4b4"/><path d="M12.5 96.5H15" stroke="#b4b4b4"/><path d="M12.5 98.5H15" stroke="#b4b4b4"/><path d="M0 101.5H15" stroke="#b4b4b4"/><text x="2.5" y="111.0" fill="#ececec" font-size="9" font-family="Liberation Sans">3</text><text x="2.5" y="120.0" fill="#ececec" font-size="9" font-family="Liberation Sans">0</text><path d="M12.5 104.5H15" stroke="#b4b4b4"/><path d="M12.5 107.5H15" stroke="#b4b4b4"/><path d="M12.5 110.5H15" stroke="#b4b4b4"/><path d="M12.5 113.5H15" stroke="#b4b4b4"/><path d="M10 116.5H15" stroke="#b4b4b4"/><path d="M12.5 118.5H15" stroke="#b4b4b4"/><path d="M12.5 121.5H15" stroke="#b4b4b4"/><path d="M12.5 124.5H15" stroke="#b4b4b4"/><path d="M12.5 127.5H15" stroke="#b4b4b4"/><path d="M0 130.5H15" stroke="#b4b4b4"/><text x="2.5" y="140.0" fill="#ececec" font-size="9" font-family="Liberation Sans">4</text><text x="2.5" y="149.0" fill="#ececec" font-size="9" font-family="Liberation Sans">0</text><path d="M12.5 133.5H15" stroke="#b4b4b4"/><path d="M12.5 136.5H15" stroke="#b4b4b4"/><path d="M12.5 138.5H15" stroke="#b4b4b4"/><path d="M12.5 141.5H15" stroke="#b4b4b4"/><path d="M10 144.5H15" stroke="#b4b4b4"/><path d="M12.5 147.5H15" stroke="#b4b4b4"/><path d="M12.5 150.5H15" stroke="#b4b4b4"/><path d="M12.5 153.5H15" stroke="#b4b4b4"/><path d="M12.5 156.5H15" stroke="#b4b4b4"/><path d="M0 158.5H15" stroke="#b4b4b4"/><text x="2.5" y="168.0" fill="#ececec" font-size="9" font-family="Liberation Sans">5</text><text x="2.5" y="177.0" fill="#ececec" font-size="9" font-family="Liberation Sans">0</text><path d="M12.5 161.5H15" stroke="#b4b4b4"/><path d="M12.5 164.5H15" stroke="#b4b4b4"/><path d="M12.5 167.5H15" stroke="#b4b4b4"/><path d="M12.5 170.5H15" stroke="#b4b4b4"/><path d="M10 173.5H15" stroke="#b4b4b4"/><path d="M12.5 176.5H15" stroke="#b4b4b4"/><path d="M12.5 178.5H15" stroke="#b4b4b4"/><path d="M12.5 181.5H15" stroke="#b4b4b4"/><path d="M12.5 184.5H15" stroke="#b4b4b4"/><path d="M0 187.5H15" stroke="#b4b4b4"/><text x="2.5" y="197.0" fill="#ececec" font-size="9" font-family="Liberation Sans">6</text><text x="2.5" y="206.0" fill="#ececec" font-size="9" font-family="Liberation Sans">0</text><path d="M12.5 190.5H15" stroke="#b4b4b4"/><path d="M12.5 193.5H15" stroke="#b4b4b4"/><path d="M12.5 196.5H15" stroke="#b4b4b4"/><path d="M12.5 198.5H15" stroke="#b4b4b4"/><path d="M10 201.5H15" stroke="#b4b4b4"/><path d="M12.5 204.5H15" stroke="#b4b4b4"/><path d="M12.5 207.5H15" stroke="#b4b4b4"/><path d="M12.5 210.5H15" stroke="#b4b4b4"/><path d="M12.5 213.5H15" stroke="#b4b4b4"/><path d="M0 216.5H15" stroke="#b4b4b4"/><text x="2.5" y="226.0" fill="#ececec" font-size="9" font-family="Liberation Sans">7</text><text x="2.5" y="235.0" fill="#ececec" font-size="9" font-family="Liberation Sans">0</text><path d="M12.5 218.5H15" stroke="#b4b4b4"/><path d="M12.5 221.5H15" stroke="#b4b4b4"/><path d="M12.5 224.5H15" stroke="#b4b4b4"/><path d="M12.5 227.5H15" stroke="#b4b4b4"/><path d="M10 230.5H15" stroke="#b4b4b4"/><path d="M12.5 233.5H15" stroke="#b4b4b4"/><path d="M12.5 236.5H15" stroke="#b4b4b4"/><path d="M12.5 238.5H15" stroke="#b4b4b4"/><path d="M12.5 241.5H15" stroke="#b4b4b4"/><path d="M0 244.5H15" stroke="#b4b4b4"/><text x="2.5" y="254.0" fill="#ececec" font-size="9" font-family="Liberation Sans">8</text><text x="2.5" y="263.0" fill="#ececec" font-size="9" font-family="Liberation Sans">0</text><path d="M12.5 247.5H15" stroke="#b4b4b4"/><path d="M12.5 250.5H15" stroke="#b4b4b4"/><path d="M12.5 253.5H15" stroke="#b4b4b4"/><path d="M12.5 256.5H15" stroke="#b4b4b4"/><path d="M10 258.5H15" stroke="#b4b4b4"/><path d="M12.5 261.5H15" stroke="#b4b4b4"/><path d="M12.5 264.5H15" stroke="#b4b4b4"/><path d="M12.5 267.5H15" stroke="#b4b4b4"/><path d="M12.5 270.5H15" stroke="#b4b4b4"/><path d="M0 273.5H15" stroke="#b4b4b4"/><text x="2.5" y="283.0" fill="#ececec" font-size="9" font-family="Liberation Sans">9</text><text x="2.5" y="292.0" fill="#ececec" font-size="9" font-family="Liberation Sans">0</text><path d="M12.5 276.5H15" stroke="#b4b4b4"/><path d="M12.5 278.5H15" stroke="#b4b4b4"/><path d="M12.5 281.5H15" stroke="#b4b4b4"/><path d="M12.5 284.5H15" stroke="#b4b4b4"/><path d="M10 287.5H15" stroke="#b4b4b4"/><path d="M12.5 290.5H15" stroke="#b4b4b4"/><path d="M12.5 293.5H15" stroke="#b4b4b4"/><path d="M12.5 296.5H15" stroke="#b4b4b4"/><path d="M12.5 298.5H15" stroke="#b4b4b4"/><path d="M0 301.5H15" stroke="#b4b4b4"/><text x="2.5" y="311.0" fill="#ececec" font-size="9" font-family="Liberation Sans">1</text><text x="2.5" y="320.0" fill="#ececec" font-size="9" font-family="Liberation Sans">0</text><text x="2.5" y="329.0" fill="#ececec" font-size="9" font-family="Liberation Sans">0</text><path d="M12.5 304.5H15" stroke="#b4b4b4"/><path d="M12.5 307.5H15" stroke="#b4b4b4"/><path d="M12.5 310.5H15" stroke="#b4b4b4"/><path d="M12.5 313.5H15" stroke="#b4b4b4"/><path d="M10 316.5H15" stroke="#b4b4b4"/><path d="M12.5 318.5H15" stroke="#b4b4b4"/><path d="M12.5 321.5H15" stroke="#b4b4b4"/><path d="M12.5 324.5H15" stroke="#b4b4b4"/><path d="M12.5 327.5H15" stroke="#b4b4b4"/><path d="M0 330.5H15" stroke="#b4b4b4"/><text x="2.5" y="340.0" fill="#ececec" font-size="9" font-family="Liberation Sans">1</text><text x="2.5" y="349.0" fill="#ececec" font-size="9" font-family="Liberation Sans">1</text><text x="2.5" y="358.0" fill="#ececec" font-size="9" font-family="Liberation Sans">0</text><path d="M12.5 333.5H15" stroke="#b4b4b4"/><path d="M12.5 336.5H15" stroke="#b4b4b4"/><path d="M12.5 338.5H15" stroke="#b4b4b4"/><path d="M12.5 341.5H15" stroke="#b4b4b4"/><path d="M10 344.5H15" stroke="#b4b4b4"/><path d="M12.5 347.5H15" stroke="#b4b4b4"/><path d="M12.5 350.5H15" stroke="#b4b4b4"/><path d="M12.5 353.5H15" stroke="#b4b4b4"/><path d="M12.5 356.5H15" stroke="#b4b4b4"/><path d="M0 358.5H15" stroke="#b4b4b4"/><text x="2.5" y="368.0" fill="#ececec" font-size="9" font-family="Liberation Sans">1</text><text x="2.5" y="377.0" fill="#ececec" font-size="9" font-family="Liberation Sans">2</text><text x="2.5" y="386.0" fill="#ececec" font-size="9" font-family="Liberation Sans">0</text><path d="M12.5 361.5H15" stroke="#b4b4b4"/><path d="M12.5 364.5H15" stroke="#b4b4b4"/><path d="M12.5 367.5H15" stroke="#b4b4b4"/><path d="M12.5 370.5H15" stroke="#b4b4b4"/><path d="M10 373.5H15" stroke="#b4b4b4"/><path d="M12.5 376.5H15" stroke="#b4b4b4"/><path d="M12.5 378.5H15" stroke="#b4b4b4"/><path d="M12.5 381.5H15" stroke="#b4b4b4"/><path d="M12.5 384.5H15" stroke="#b4b4b4"/><path d="M0 387.5H15" stroke="#b4b4b4"/><text x="2.5" y="397.0" fill="#ececec" font-size="9" font-family="Liberation Sans">1</text><text x="2.5" y="406.0" fill="#ececec" font-size="9" font-family="Liberation Sans">3</text><text x="2.5" y="415.0" fill="#ececec" font-size="9" font-family="Liberation Sans">0</text><path d="M12.5 390.5H15" stroke="#b4b4b4"/><path d="M12.5 393.5H15" stroke="#b4b4b4"/><path d="M12.5 396.5H15" stroke="#b4b4b4"/><path d="M12.5 398.5H15" stroke="#b4b4b4"/><path d="M10 401.5H15" stroke="#b4b4b4"/><path d="M12.5 404.5H15" stroke="#b4b4b4"/><path d="M12.5 407.5H15" stroke="#b4b4b4"/><path d="M12.5 410.5H15" stroke="#b4b4b4"/><path d="M12.5 413.5H15" stroke="#b4b4b4"/><path d="M0 416.5H15" stroke="#b4b4b4"/><text x="2.5" y="426.0" fill="#ececec" font-size="9" font-family="Liberation Sans">1</text><text x="2.5" y="435.0" fill="#ececec" font-size="9" font-family="Liberation Sans">4</text><text x="2.5" y="444.0" fill="#ececec" font-size="9" font-family="Liberation Sans">0</text><path d="M12.5 418.5H15" stroke="#b4b4b4"/><path d="M12.5 421.5H15" stroke="#b4b4b4"/><path d="M12.5 424.5H15" stroke="#b4b4b4"/><path d="M12.5 427.5H15" stroke="#b4b4b4"/><path d="M10 430.5H15" stroke="#b4b4b4"/><path d="M12.5 433.5H15" stroke="#b4b4b4"/><path d="M12.5 436.5H15" stroke="#b4b4b4"/><path d="M12.5 438.5H15" stroke="#b4b4b4"/><path d="M12.5 441.5H15" stroke="#b4b4b4"/><path d="M0 444.5H15" stroke="#b4b4b4"/><text x="2.5" y="454.0" fill="#ececec" font-size="9" font-family="Liberation Sans">1</text><text x="2.5" y="463.0" fill="#ececec" font-size="9" font-family="Liberation Sans">5</text><text x="2.5" y="472.0" fill="#ececec" font-size="9" font-family="Liberation Sans">0</text><path d="M12.5 447.5H15" stroke="#b4b4b4"/><path d="M12.5 450.5H15" stroke="#b4b4b4"/><path d="M12.5 453.5H15" stroke="#b4b4b4"/><path d="M12.5 456.5H15" stroke="#b4b4b4"/><path d="M10 458.5H15" stroke="#b4b4b4"/><path d="M12.5 461.5H15" stroke="#b4b4b4"/><path d="M12.5 464.5H15" stroke="#b4b4b4"/><path d="M12.5 467.5H15" stroke="#b4b4b4"/><path d="M12.5 470.5H15" stroke="#b4b4b4"/><path d="M0 473.5H15" stroke="#b4b4b4"/><text x="2.5" y="483.0" fill="#ececec" font-size="9" font-family="Liberation Sans">1</text><text x="2.5" y="492.0" fill="#ececec" font-size="9" font-family="Liberation Sans">6</text><text x="2.5" y="501.0" fill="#ececec" font-size="9" font-family="Liberation Sans">0</text><path d="M12.5 476.5H15" stroke="#b4b4b4"/><path d="M12.5 478.5H15" stroke="#b4b4b4"/><path d="M12.5 481.5H15" stroke="#b4b4b4"/><path d="M12.5 484.5H15" stroke="#b4b4b4"/><path d="M10 487.5H15" stroke="#b4b4b4"/><path d="M12.5 490.5H15" stroke="#b4b4b4"/><path d="M12.5 493.5H15" stroke="#b4b4b4"/><path d="M12.5 496.5H15" stroke="#b4b4b4"/><path d="M12.5 498.5H15" stroke="#b4b4b4"/><path d="M0 501.5H15" stroke="#b4b4b4"/><text x="2.5" y="511.0" fill="#ececec" font-size="9" font-family="Liberation Sans">1</text><text x="2.5" y="520.0" fill="#ececec" font-size="9" font-family="Liberation Sans">7</text><text x="2.5" y="529.0" fill="#ececec" font-size="9" font-family="Liberation Sans">0</text><path d="M12.5 504.5H15" stroke="#b4b4b4"/><path d="M12.5 507.5H15" stroke="#b4b4b4"/><path d="M12.5 510.5H15" stroke="#b4b4b4"/><path d="M12.5 513.5H15" stroke="#b4b4b4"/><path d="M10 516.5H15" stroke="#b4b4b4"/><path d="M12.5 518.5H15" stroke="#b4b4b4"/><path d="M12.5 521.5H15" stroke="#b4b4b4"/><path d="M12.5 524.5H15" stroke="#b4b4b4"/><path d="M12.5 527.5H15" stroke="#b4b4b4"/><path d="M0 530.5H15" stroke="#b4b4b4"/><text x="2.5" y="540.0" fill="#ececec" font-size="9" font-family="Liberation Sans">1</text><text x="2.5" y="549.0" fill="#ececec" font-size="9" font-family="Liberation Sans">8</text><text x="2.5" y="558.0" fill="#ececec" font-size="9" font-family="Liberation Sans">0</text><path d="M12.5 533.5H15" stroke="#b4b4b4"/><path d="M12.5 536.5H15" stroke="#b4b4b4"/><path d="M12.5 538.5H15" stroke="#b4b4b4"/><path d="M12.5 541.5H15" stroke="#b4b4b4"/><path d="M10 544.5H15" stroke="#b4b4b4"/><path d="M12.5 547.5H15" stroke="#b4b4b4"/><path d="M12.5 550.5H15" stroke="#b4b4b4"/><path d="M12.5 553.5H15" stroke="#b4b4b4"/><path d="M12.5 556.5H15" stroke="#b4b4b4"/><path d="M0 558.5H15" stroke="#b4b4b4"/><text x="2.5" y="568.0" fill="#ececec" font-size="9" font-family="Liberation Sans">1</text><text x="2.5" y="577.0" fill="#ececec" font-size="9" font-family="Liberation Sans">9</text><text x="2.5" y="586.0" fill="#ececec" font-size="9" font-family="Liberation Sans">0</text><path d="M12.5 561.5H15" stroke="#b4b4b4"/><path d="M12.5 564.5H15" stroke="#b4b4b4"/><path d="M12.5 567.5H15" stroke="#b4b4b4"/><path d="M12.5 570.5H15" stroke="#b4b4b4"/><path d="M10 573.5H15" stroke="#b4b4b4"/><path d="M12.5 576.5H15" stroke="#b4b4b4"/><path d="M12.5 578.5H15" stroke="#b4b4b4"/><path d="M12.5 581.5H15" stroke="#b4b4b4"/><path d="M12.5 584.5H15" stroke="#b4b4b4"/><path d="M0 587.5H15" stroke="#b4b4b4"/><text x="2.5" y="597.0" fill="#ececec" font-size="9" font-family="Liberation Sans">2</text><text x="2.5" y="606.0" fill="#ececec" font-size="9" font-family="Liberation Sans">0</text><text x="2.5" y="615.0" fill="#ececec" font-size="9" font-family="Liberation Sans">0</text><path d="M12.5 590.5H15" stroke="#b4b4b4"/><path d="M12.5 593.5H15" stroke="#b4b4b4"/><path d="M12.5 596.5H15" stroke="#b4b4b4"/><path d="M12.5 598.5H15" stroke="#b4b4b4"/><path d="M10 601.5H15" stroke="#b4b4b4"/><path d="M12.5 604.5H15" stroke="#b4b4b4"/><path d="M12.5 607.5H15" stroke="#b4b4b4"/><path d="M12.5 610.5H15" stroke="#b4b4b4"/><path d="M12.5 613.5H15" stroke="#b4b4b4"/><path d="M0 616.5H15" stroke="#b4b4b4"/><text x="2.5" y="626.0" fill="#ececec" font-size="9" font-family="Liberation Sans">2</text><text x="2.5" y="635.0" fill="#ececec" font-size="9" font-family="Liberation Sans">1</text><text x="2.5" y="644.0" fill="#ececec" font-size="9" font-family="Liberation Sans">0</text><path d="M12.5 618.5H15" stroke="#b4b4b4"/><path d="M12.5 621.5H15" stroke="#b4b4b4"/><path d="M12.5 624.5H15" stroke="#b4b4b4"/><path d="M12.5 627.5H15" stroke="#b4b4b4"/><path d="M10 630.5H15" stroke="#b4b4b4"/><path d="M12.5 633.5H15" stroke="#b4b4b4"/><path d="M12.5 636.5H15" stroke="#b4b4b4"/><path d="M12.5 638.5H15" stroke="#b4b4b4"/></svg>
<div class="a" style="left:47px;top:79px;width:970px;height:1px;background:#8a8a8a"></div>
<div class="a" style="left:62px;top:64px;width:1px;height:654px;background:#8a8a8a"></div>
<svg class="a" style="left:47px;top:64px" width="15" height="15"><rect x="2" y="4" width="1" height="1" fill="#cfcfcf"/><rect x="6" y="4" width="1" height="1" fill="#cfcfcf"/><rect x="8" y="4" width="1" height="1" fill="#cfcfcf"/><rect x="10" y="4" width="1" height="1" fill="#cfcfcf"/><rect x="12" y="4" width="1" height="1" fill="#cfcfcf"/><rect x="4" y="1" width="1" height="1" fill="#cfcfcf"/><rect x="4" y="6" width="1" height="1" fill="#cfcfcf"/><rect x="4" y="8" width="1" height="1" fill="#cfcfcf"/><rect x="4" y="10" width="1" height="1" fill="#cfcfcf"/><rect x="4" y="12" width="1" height="1" fill="#cfcfcf"/><rect x="3" y="3" width="3" height="3" fill="none" stroke="#cfcfcf" stroke-width="0.8"/></svg>
<div class="a" style="left:63px;top:80px;width:954px;height:638px;background:#5e5e5e"></div>
<div class="a" style="left:103px;top:82px;width:874px;height:626px;border:1px solid #bd7887"></div>
<div class="a" style="left:104px;top:83px;width:872px;height:624px;border:1px solid #7a4e5a"></div>
<div class="a" style="left:117px;top:97px;width:850px;height:600px;background:#000"></div>
<div class="a" style="left:115px;top:95px;width:850px;height:600px;background:#fff"></div>
<div class="a" style="left:115px;top:284px;width:850px;height:1px;background:#a6fafe"></div>
<div class="a" style="left:115px;top:286px;width:850px;height:1px;background:#e4fcfd"></div>
<div class="a" style="left:115px;top:285px;width:850px;height:1px;background:#5cc0cc"></div>
<div class="a" style="left:115px;top:298px;width:850px;height:1px;background:#a6fafe"></div>
<div class="a" style="left:115px;top:300px;width:850px;height:1px;background:#e4fcfd"></div>
<div class="a" style="left:115px;top:299px;width:850px;height:1px;background:#5cc0cc"></div>
<div class="a" style="left:115px;top:489px;width:850px;height:1px;background:#a6fafe"></div>
<div class="a" style="left:115px;top:491px;width:850px;height:1px;background:#e4fcfd"></div>
<div class="a" style="left:115px;top:490px;width:850px;height:1px;background:#5cc0cc"></div>
<div class="a" style="left:115px;top:503px;width:850px;height:1px;background:#a6fafe"></div>
<div class="a" style="left:115px;top:505px;width:850px;height:1px;background:#e4fcfd"></div>
<div class="a" style="left:115px;top:504px;width:850px;height:1px;background:#5cc0cc"></div>
<div class="a" style="left:134px;top:113px;width:812px;height:1px;background:#fbe6fb"></div>
<div class="a" style="left:134px;top:676px;width:812px;height:1px;background:#fbe6fb"></div>
<div class="a" style="left:133px;top:112px;width:814px;height:1px;background:#a274b4"></div>
<div class="a" style="left:133px;top:677px;width:814px;height:1px;background:#b070c0"></div>
<div class="a" style="left:133px;top:112px;width:1px;height:566px;background:#66528e"></div>
<div class="a" style="left:394px;top:112px;width:1px;height:566px;background:#66528e"></div>
<div class="a" style="left:409px;top:112px;width:1px;height:566px;background:#66528e"></div>
<div class="a" style="left:670px;top:112px;width:1px;height:566px;background:#66528e"></div>
<div class="a" style="left:685px;top:112px;width:1px;height:566px;background:#66528e"></div>
<div class="a" style="left:946px;top:112px;width:1px;height:566px;background:#66528e"></div>
<div class="a" style="left:419px;top:298px;width:244px;height:11px;background:#000;color:#fff;font-size:7.3px;line-height:11px;text-shadow:0.2px 0 0 rgba(255,255,255,0.6);text-align:center;white-space:nowrap;overflow:hidden"><span style="letter-spacing:0.0745px">Digitalisierung hin oder her – ohne mehrseitige Prospekte, Faltblätter und</span></div>
<div class="a" style="left:413px;top:310px;width:256px;height:11px;background:#000;color:#fff;font-size:7.3px;line-height:11px;text-shadow:0.2px 0 0 rgba(255,255,255,0.6);text-align:center;white-space:nowrap;overflow:hidden"><span style="letter-spacing:0.0414px">Broschüren kommt auch heute noch nahezu keine Firma aus. Umso wichtiger</span></div>
<div class="a" style="left:410px;top:322px;width:260px;height:11px;background:#000;color:#fff;font-size:7.3px;line-height:11px;text-shadow:0.2px 0 0 rgba(255,255,255,0.6);text-align:center;white-space:nowrap;overflow:hidden"><span style="letter-spacing:0.0171px">ist es, beim professionellen Erstellen dieser Werbemittel keine Zeit zu verlieren.</span></div>
<div class="a" style="left:411px;top:334px;width:258px;height:11px;background:#000;color:#fff;font-size:7.3px;line-height:11px;text-shadow:0.2px 0 0 rgba(255,255,255,0.6);text-align:center;white-space:nowrap;overflow:hidden"><span style="letter-spacing:0.0164px">Wie Sie einen dreiseitigen Prospekt ansprechend, schnell und einfach mit Ado-</span></div>
<div class="a" style="left:446px;top:346px;width:188px;height:11px;background:#000;color:#fff;font-size:7.3px;line-height:11px;text-shadow:0.2px 0 0 rgba(255,255,255,0.6);text-align:center;white-space:nowrap;overflow:hidden"><span style="letter-spacing:-0.0172px">be InDesign 2020 gestalten, lernen Sie in diesem Tutorial.</span></div>
<div class="a" style="left:419px;top:298px;width:244px;height:1px;background:#7a1414"></div>
<div class="a" style="left:1017px;top:64px;width:15px;height:654px;background:#4c4c4c"></div>
<svg class="a" style="left:1019px;top:67px" width="12" height="7"><path d="M1 6L6.0 1L11 6" fill="none" stroke="#6e6e6e" stroke-width="1.2"/></svg>
<div class="a" style="left:1018px;top:157px;width:14px;height:475px;background:#6a6a6a;border-radius:7px"></div>
<svg class="a" style="left:1019px;top:707px" width="12" height="7"><path d="M1 1L6.0 6L11 1" fill="none" stroke="#777" stroke-width="1.2"/></svg>
<svg class="a" style="left:782px;top:64px" width="1" height="15"><rect x="0" y="0" width="1" height="1" fill="#f0f0f0"/><rect x="0" y="1" width="1" height="1" fill="#000"/><rect x="0" y="2" width="1" height="1" fill="#f0f0f0"/><rect x="0" y="3" width="1" height="1" fill="#000"/><rect x="0" y="4" width="1" height="1" fill="#f0f0f0"/><rect x="0" y="5" width="1" height="1" fill="#000"/><rect x="0" y="6" width="1" height="1" fill="#f0f0f0"/><rect x="0" y="7" width="1" height="1" fill="#000"/><rect x="0" y="8" width="1" height="1" fill="#f0f0f0"/><rect x="0" y="9" width="1" height="1" fill="#000"/><rect x="0" y="10" width="1" height="1" fill="#f0f0f0"/><rect x="0" y="11" width="1" height="1" fill="#000"/><rect x="0" y="12" width="1" height="1" fill="#f0f0f0"/><rect x="0" y="13" width="1" height="1" fill="#000"/><rect x="0" y="14" width="1" height="1" fill="#f0f0f0"/></svg>
<div class="a" style="left:47px;top:719px;width:985px;height:16px;background:#535353"></div>
<div class="t" style="left:60px;top:723px;font-size:10px;color:#e0e0e0">75,75 %</div>
<svg class="a" style="left:103px;top:724px" width="9" height="6"><path d="M1 1L4.5 5L8 1" fill="none" stroke="#cfcfcf" stroke-width="1.2"/></svg>
<svg class="a" style="left:122px;top:721px" width="40" height="12"><path d="M1 1.5V10.5" stroke="#777" stroke-width="1.6"/><path d="M8.5 1.5L3.5 6L8.5 10.5Z" fill="#777"/><path d="M32 1.5L27 6L32 10.5Z" fill="#777"/></svg>
<div class="fld" style="left:165px;top:719px;width:89px;height:16px;background:#464646;border-color:#6d6d6d"></div>
<div class="a" style="left:235px;top:720px;width:1px;height:14px;background:#6d6d6d"></div>
<div class="t" style="left:169px;top:723px;font-size:10px;color:#e8e8e8">1</div>
<svg class="a" style="left:240px;top:724px" width="9" height="6"><path d="M1 1L4.5 5L8 1" fill="none" stroke="#cfcfcf" stroke-width="1.2"/></svg>
<svg class="a" style="left:262px;top:721px" width="40" height="12"><path d="M3 1.5L8 6L3 10.5Z" fill="#777"/><path d="M24 1.5L29 6L24 10.5Z" fill="#777"/><path d="M31.5 1.5V10.5" stroke="#777" stroke-width="1.6"/></svg>
<svg class="a" style="left:310px;top:719px" width="18" height="16"><path d="M7 2A6 6 0 1 0 13 8H7Z" fill="#d8d8d8"/><path d="M8.5 1A5.5 5.5 0 0 1 13.5 6.5H8.5Z" fill="none" stroke="#d8d8d8" stroke-width="1.2"/><path d="M13.5 12L15.5 14L17 12Z" fill="#bbb"/></svg>
<div class="t" style="left:343px;top:723px;font-size:10px;color:#e0e0e0">[Grundprofil] (Arb...</div>
<svg class="a" style="left:445px;top:724px" width="9" height="6"><path d="M1 1L4.5 5L8 1" fill="none" stroke="#cfcfcf" stroke-width="1.2"/></svg>
<div class="a" style="left:469px;top:722px;width:11px;height:11px;border-radius:50%;background:#3ab54a"></div>
<div class="t" style="left:485px;top:723px;font-size:10px;color:#e0e0e0">Ohne Fehler</div>
<svg class="a" style="left:557px;top:724px" width="9" height="6"><path d="M1 1L4.5 5L8 1" fill="none" stroke="#cfcfcf" stroke-width="1.2"/></svg>
<svg class="a" style="left:577px;top:721px" width="8" height="12"><path d="M6 1.5L2 6L6 10.5" fill="none" stroke="#6e6e6e" stroke-width="1.2"/></svg>
<div class="a" style="left:711px;top:720px;width:145px;height:14px;background:#6a6a6a;border-radius:7px"></div>
<svg class="a" style="left:984px;top:721px" width="8" height="12"><path d="M2 1.5L6 6L2 10.5" fill="none" stroke="#6e6e6e" stroke-width="1.2"/></svg>
<div class="a" style="left:995px;top:720px;width:1px;height:15px;background:#444"></div>
<svg class="a" style="left:999px;top:721px" width="16" height="12"><rect x="1" y="1" width="14" height="10" fill="none" stroke="#cfcfcf" stroke-width="1.2"/><path d="M8 1V11" stroke="#cfcfcf" stroke-width="1.2"/></svg>
<div class="a" style="left:1032px;top:34px;width:3px;height:702px;background:#3c3c3c"></div>
<div class="a" style="left:1035px;top:34px;width:253px;height:13px;background:#404040"></div>
<svg class="a" style="left:1273px;top:38px" width="9" height="6"><path d="M0.5 0.5L3.5 2.75L0.5 5ZM4.5 0.5L7.5 2.75L4.5 5Z" fill="#dcdcdc"/></svg>
<div class="a" style="left:1035px;top:47px;width:253px;height:27px;background:#424242"></div>
<div class="a" style="left:1132px;top:47px;width:50px;height:26px;background:#474747;border-right:1px solid #3d3d3d"></div>
<div class="a" style="left:1182px;top:47px;width:66px;height:26px;background:#474747;border-right:1px solid #3d3d3d"></div>
<div class="a" style="left:1035px;top:47px;width:97px;height:27px;background:#535353"></div>
<div class="t" style="left:1047px;top:56px;font-size:10.6px;font-weight:bold;color:#efefef">Eigenschaften</div>
<div class="t" style="left:1144px;top:56px;font-size:10.6px;font-weight:bold;color:#a6a6a6">Seiten</div>
<div class="t" style="left:1193px;top:56px;font-size:10.6px;font-weight:bold;color:#a6a6a6;width:54px;overflow:hidden">CC Libraries</div>
<div class="a" style="left:1035px;top:74px;width:253px;height:661px;background:#535353"></div>
<div class="a" style="left:1287px;top:34px;width:1px;height:702px;background:#3a3a3a"></div>
<div class="a" style="left:1035px;top:735px;width:253px;height:1px;background:#3a3a3a"></div>
<div class="a" style="left:1275px;top:74px;width:12px;height:661px;background:#4b4b4b"></div>
<svg class="a" style="left:1276px;top:77px" width="11" height="6.5"><path d="M1 5.5L5.5 1L10 5.5" fill="none" stroke="#6f6f6f" stroke-width="1.2"/></svg>
<div class="a" style="left:1277px;top:87px;width:9px;height:564px;background:#6a6a6a;border-radius:4.5px"></div>
<svg class="a" style="left:1276px;top:710px" width="11" height="6.5"><path d="M1 1L5.5 5.5L10 1" fill="none" stroke="#6f6f6f" stroke-width="1.2"/></svg>
<div class="lab" style="left:1045px;top:86px">Zeichen</div>
<div class="sep" style="left:1035px;top:106px;width:240px"></div>
<div class="lab" style="left:1045px;top:120px">Textformat</div>
<div class="a" style="left:1045px;top:140px;width:220px;height:21px;border:1px solid #6d6d6d;border-radius:2px;background:#535353"></div>
<div class="a" style="left:1046px;top:141px;width:108px;height:19px;background:#323232"></div>
<div class="t" style="left:1067px;top:147px;font-size:9.8px;color:#5b9ee6">Absatzformate</div>
<div class="t" style="left:1173px;top:147px;font-size:10px;color:#f0f0f0">Zeichenformate</div>
<div class="fld" style="left:1045px;top:168px;width:220px;height:36px"></div>
<div class="a" style="left:1245px;top:169px;width:1px;height:34px;background:#6d6d6d"></div>
<svg class="a" style="left:1249px;top:183px" width="11" height="7"><path d="M1 1L5.5 6L10 1" fill="none" stroke="#d8d8d8" stroke-width="1.2"/></svg>
<div class="a" style="left:1051px;top:175px;width:24px;height:24px;background:#fff;border-radius:2px"></div>
<div class="t" style="left:1053px;top:180px;font-size:13px;font-style:italic;color:#111">Ag</div>
<div class="t" style="left:1082px;top:182px;font-size:9.6px;color:#f0f0f0">Fließtext</div>
<svg class="a" style="left:1052px;top:216px" width="11" height="13"><path d="M4.5 0.5H10.5V2H9.3V12H8V2H6.8V12H5.5V7.5C2.5 7.5 0.8 6 0.8 4C0.8 1.8 2.5 0.5 4.5 0.5Z" fill="#d4d4d4"/></svg>
<svg class="a" style="left:1062px;top:225px" width="5" height="4"><path d="M0.5 0.5H4.5L2.5 3Z" fill="#bdbdbd"/></svg>
<svg class="a" style="left:1176px;top:213px" width="18" height="15"><path d="M0.5 7H6M3.8 4.5L6.3 7L3.8 9.5" fill="none" stroke="#a0a0a0" stroke-width="1.3"/><path d="M7.5 5V1.5H13.5V5.5" fill="none" stroke="#a0a0a0" stroke-width="1.2"/><rect x="10.5" y="5.5" width="6.5" height="8.5" fill="none" stroke="#a0a0a0" stroke-width="1.2"/><path d="M7.5 9V14H10.5" fill="none" stroke="#a0a0a0" stroke-width="1.2"/></svg>
<svg class="a" style="left:1213px;top:215px" width="11" height="13"><path d="M4.5 0.5H10.5V2H9.3V12H8V2H6.8V12H5.5V7.5C2.5 7.5 0.8 6 0.8 4C0.8 1.8 2.5 0.5 4.5 0.5Z" fill="#8e8e8e"/></svg>
<svg class="a" style="left:1224px;top:217px" width="8" height="8"><path d="M1 7L7 1M2 2L6.5 6.5" stroke="#8e8e8e" stroke-width="1.1"/></svg>
<svg class="a" style="left:1247px;top:215px" width="13" height="13"><rect x="1" y="1" width="11" height="11" fill="none" stroke="#d8d8d8" stroke-width="1.1"/><path d="M6.5 3.5V9.5M3.5 6.5H9.5" stroke="#e0e0e0" stroke-width="1.1"/></svg>
<svg class="a" style="left:1243px;top:230px" width="22" height="22"><path d="M11 0L21.5 10.5H16V21H6V10.5H0.5Z" fill="#e8141c"/></svg>
<div class="sep" style="left:1035px;top:239px;width:208px"></div>
<div class="sep" style="left:1265px;top:239px;width:10px"></div>
<div class="a" style="left:1123px;top:157px;width:51px;height:51px;border-radius:50%;background:#e8141c"></div>
<div class="t" style="left:1128px;top:167px;width:41px;text-align:center;font-size:35px;font-weight:bold;color:#fff;letter-spacing:-1px;line-height:30px;text-indent:-2px">13</div>
<div class="lab" style="left:1045px;top:253px">Aussehen</div>
<svg class="a" style="left:1046px;top:273px" width="16" height="16"><rect x="0" y="0" width="16" height="16" fill="#f4f4f4"/><path d="M3.5 3.5H9.5M3.5 3.5V6M6.5 3.5V13M5 13H8" fill="none" stroke="#cdcdcd" stroke-width="1.2"/><path d="M0 16L16 0" stroke="#c8141c" stroke-width="2.4"/></svg>
<div class="lab" style="left:1073px;top:278px;color:#ececec">Fläche</div>
<svg class="a" style="left:1046px;top:299px" width="15" height="15"><rect x="0" y="0" width="15" height="15" fill="#f4f4f4"/><path d="M3.5 3.5H11.5V11.5H3.5Z" fill="none" stroke="#cdcdcd" stroke-width="1.2"/><path d="M0 15L15 0" stroke="#c8141c" stroke-width="2.4"/></svg>
<div class="lab" style="left:1073px;top:304px;color:#d8d8d8">Kontur</div>
<div class="a" style="left:1073px;top:314px;width:34px;height:1px;background:#cfcfcf"></div>
<div class="fld" style="left:1135px;top:298px;width:70px;height:21px"></div>
<div class="a" style="left:1152px;top:299px;width:1px;height:19px;background:#6d6d6d"></div>
<div class="a" style="left:1186px;top:299px;width:1px;height:19px;background:#6d6d6d"></div>
<svg class="a" style="left:1138px;top:299px" width="10" height="19"><path d="M1.5 6.5L5 3.0L8.5 6.5M1.5 12.5L5 16.0L8.5 12.5" fill="none" stroke="#cfcfcf" stroke-width="1"/></svg>
<div class="t" style="left:1156px;top:305px;font-size:10px;color:#ececec">0 Pt</div>
<svg class="a" style="left:1190px;top:306px" width="11" height="7"><path d="M1 1L5.5 6L10 1" fill="none" stroke="#d8d8d8" stroke-width="1.2"/></svg>
<div class="a" style="left:1210px;top:298px;width:55px;height:21px;background:#5a5a5a;border-radius:2px"></div>
<svg class="a" style="left:1248px;top:306px" width="11" height="7"><path d="M1 1L5.5 6L10 1" fill="none" stroke="#7a7a7a" stroke-width="1.2"/></svg>
<div class="sep" style="left:1035px;top:329px;width:240px"></div>
<div class="lab" style="left:1045px;top:343px">Zeichen</div>
<div class="fld" style="left:1045px;top:363px;width:220px;height:21px"></div>
<div class="a" style="left:1246px;top:364px;width:1px;height:19px;background:#6d6d6d"></div>
<svg class="a" style="left:1047px;top:367px" width="20" height="13"><circle cx="5" cy="5" r="3.6" fill="none" stroke="#cfcfcf" stroke-width="1.2"/><path d="M7.6 7.6L10.5 10.8" stroke="#cfcfcf" stroke-width="1.4"/><path d="M12 5L14.5 7.5L17 5" fill="none" stroke="#cfcfcf" stroke-width="1.1"/></svg>
<div class="t" style="left:1069px;top:369px;font-size:10px;color:#ececec">Calibri</div>
<svg class="a" style="left:1250px;top:371px" width="11" height="7"><path d="M1 1L5.5 6L10 1" fill="none" stroke="#d8d8d8" stroke-width="1.2"/></svg>
<div class="fld" style="left:1045px;top:389px;width:220px;height:21px"></div>
<div class="a" style="left:1246px;top:390px;width:1px;height:19px;background:#6d6d6d"></div>
<div class="t" style="left:1049px;top:396px;font-size:10px;color:#ececec">Regular</div>
<svg class="a" style="left:1250px;top:397px" width="11" height="7"><path d="M1 1L5.5 6L10 1" fill="none" stroke="#d8d8d8" stroke-width="1.2"/></svg>
<div class="fld" style="left:1068px;top:416px;width:80px;height:20px"></div><div class="a" style="left:1085px;top:417px;width:1px;height:18px;background:#6d6d6d"></div><div class="a" style="left:1129px;top:417px;width:1px;height:18px;background:#6d6d6d"></div><svg class="a" style="left:1071px;top:416px" width="10" height="20"><path d="M1.5 7.0L5 3.5L8.5 7.0M1.5 13.0L5 16.5L8.5 13.0" fill="none" stroke="#cfcfcf" stroke-width="1"/></svg><div class="t" style="left:1090px;top:422px;font-size:10px;color:#ececec">8 Pt</div><svg class="a" style="left:1133px;top:424px" width="11" height="7"><path d="M1 1L5.5 6L10 1" fill="none" stroke="#d8d8d8" stroke-width="1.2"/></svg>
<div class="fld" style="left:1185px;top:416px;width:80px;height:20px"></div><div class="a" style="left:1202px;top:417px;width:1px;height:18px;background:#6d6d6d"></div><div class="a" style="left:1246px;top:417px;width:1px;height:18px;background:#6d6d6d"></div><svg class="a" style="left:1188px;top:416px" width="10" height="20"><path d="M1.5 7.0L5 3.5L8.5 7.0M1.5 13.0L5 16.5L8.5 13.0" fill="none" stroke="#cfcfcf" stroke-width="1"/></svg><div class="t" style="left:1207px;top:422px;font-size:10px;color:#ececec">12 Pt</div><svg class="a" style="left:1250px;top:424px" width="11" height="7"><path d="M1 1L5.5 6L10 1" fill="none" stroke="#d8d8d8" stroke-width="1.2"/></svg>
<div class="fld" style="left:1068px;top:442px;width:80px;height:20px"></div><div class="a" style="left:1085px;top:443px;width:1px;height:18px;background:#6d6d6d"></div><div class="a" style="left:1129px;top:443px;width:1px;height:18px;background:#6d6d6d"></div><div class="a" style="left:1067px;top:441px;width:19px;height:22px;background:#585858"></div><svg class="a" style="left:1071px;top:442px" width="10" height="20"><path d="M1.5 7L5 3.5L8.5 7M1.5 13L5 16.5L8.5 13" fill="none" stroke="#6e6e6e" stroke-width="1"/></svg><div class="t" style="left:1090px;top:448px;font-size:10px;color:#ececec">Metrisch</div><svg class="a" style="left:1133px;top:450px" width="11" height="7"><path d="M1 1L5.5 6L10 1" fill="none" stroke="#d8d8d8" stroke-width="1.2"/></svg>
<div class="fld" style="left:1185px;top:442px;width:80px;height:20px"></div><div class="a" style="left:1202px;top:443px;width:1px;height:18px;background:#6d6d6d"></div><div class="a" style="left:1246px;top:443px;width:1px;height:18px;background:#6d6d6d"></div><svg class="a" style="left:1188px;top:442px" width="10" height="20"><path d="M1.5 7.0L5 3.5L8.5 7.0M1.5 13.0L5 16.5L8.5 13.0" fill="none" stroke="#cfcfcf" stroke-width="1"/></svg><div class="t" style="left:1207px;top:448px;font-size:10px;color:#ececec">0</div><svg class="a" style="left:1250px;top:450px" width="11" height="7"><path d="M1 1L5.5 6L10 1" fill="none" stroke="#d8d8d8" stroke-width="1.2"/></svg>
<svg class="a" style="left:1045px;top:417px" width="20" height="18"><text x="0" y="16" font-family="Liberation Serif" font-weight="bold" font-size="11" fill="#c8c8c8">T</text><text x="6" y="16" font-family="Liberation Serif" font-weight="bold" font-size="19" fill="#c8c8c8">T</text></svg>
<svg class="a" style="left:1161px;top:415px" width="20" height="21"><text x="6" y="9.5" font-family="Liberation Sans" font-weight="bold" font-size="10" fill="#c8c8c8">A</text><path d="M6 10.5H14" stroke="#c8c8c8" stroke-width="1"/><text x="6" y="20" font-family="Liberation Sans" font-weight="bold" font-size="10" fill="#c8c8c8">A</text><path d="M3 9V19.5M1.2 11L3 8.5L4.8 11M1.2 17.5L3 20L4.8 17.5" fill="none" stroke="#c8c8c8" stroke-width="1.1"/></svg>
<svg class="a" style="left:1045px;top:443px" width="20" height="20"><path d="M0.8 1.5L4 11.5L7.2 1.5M5.8 11.5L9.6 1.5M9.2 11.5L12.6 1.5L16 11.5M10.6 8H14.6" fill="none" stroke="#c8c8c8" stroke-width="1.2"/><path d="M9 16.5H16M11.5 14L9 16.5L11.5 19" fill="none" stroke="#c8c8c8" stroke-width="1.3"/></svg>
<svg class="a" style="left:1161px;top:442px" width="20" height="20"><rect x="0.5" y="1" width="18" height="11" fill="#c4c4c4"/><text x="1.5" y="11" font-family="Liberation Sans" font-weight="bold" font-size="10.5" fill="#4a4a4a" letter-spacing="-1">VA</text><path d="M1 16H18.5M3.5 13.8L1 16L3.5 18.2M16 13.8L18.5 16L16 18.2" fill="none" stroke="#c8c8c8" stroke-width="1.1"/></svg>
<div class="a" style="left:1255px;top:476px;width:4px;height:4px;border-radius:50%;background:#c4c4c4"></div><div class="a" style="left:1260px;top:476px;width:4px;height:4px;border-radius:50%;background:#c4c4c4"></div><div class="a" style="left:1265px;top:476px;width:4px;height:4px;border-radius:50%;background:#c4c4c4"></div>
<div class="sep" style="left:1035px;top:491px;width:240px"></div>
<div class="lab" style="left:1045px;top:504px">Absatz</div>
<div class="a" style="left:1070px;top:525px;width:22px;height:22px;background:#2c2c2c;border-radius:3px"></div>
<svg class="a" style="left:1049.0px;top:529px" width="16" height="14" overflow="visible"><path d="M0 0.5H14M0 3.5H10M0 6.5H14M0 9.5H10M0 12.5H14" stroke="#d0d0d0" stroke-width="1.2"/></svg>
<svg class="a" style="left:1074.0px;top:529px" width="16" height="14" overflow="visible"><path d="M0 0.5H14M2 3.5H12M0 6.5H14M2 9.5H12M0 12.5H14" stroke="#d0d0d0" stroke-width="1.2"/></svg>
<svg class="a" style="left:1097.0px;top:529px" width="16" height="14" overflow="visible"><path d="M0 0.5H14M4 3.5H14M0 6.5H14M4 9.5H14M0 12.5H14" stroke="#d0d0d0" stroke-width="1.2"/></svg>
<svg class="a" style="left:1123.5px;top:529px" width="16" height="14" overflow="visible"><path d="M0 0.5H14M0 3.5H14M0 6.5H14M0 9.5H14M0 12.5H9" stroke="#d0d0d0" stroke-width="1.2"/></svg>
<svg class="a" style="left:1147.5px;top:529px" width="16" height="14" overflow="visible"><path d="M0 0.5H14M0 3.5H14M0 6.5H14M0 9.5H14M2.5 12.5H11.5" stroke="#d0d0d0" stroke-width="1.2"/></svg>
<svg class="a" style="left:1171.5px;top:529px" width="16" height="14" overflow="visible"><path d="M0 0.5H14M0 3.5H14M0 6.5H14M0 9.5H14M5 12.5H14" stroke="#d0d0d0" stroke-width="1.2"/></svg>
<svg class="a" style="left:1196.0px;top:529px" width="16" height="14" overflow="visible"><path d="M0 0.5H14M0 3.5H14M0 6.5H14M0 9.5H14M0 12.5H14" stroke="#d0d0d0" stroke-width="1.2"/></svg>
<svg class="a" style="left:1221.0px;top:529px" width="16" height="14" overflow="visible"><path d="M0 0.5H11M4 3.5H11M0 6.5H11M4 9.5H11M0 12.5H11" stroke="#d0d0d0" stroke-width="1.2"/><path d="M13.5 -1V14" stroke="#d0d0d0" stroke-width="1.2"/></svg>
<svg class="a" style="left:1245.0px;top:529px" width="16" height="14" overflow="visible"><path d="M0 0.5H11M0 3.5H8M0 6.5H11M0 9.5H8M0 12.5H11" stroke="#d0d0d0" stroke-width="1.2"/><path d="M13.5 -1V14" stroke="#d0d0d0" stroke-width="1.2"/></svg>
<div class="a" style="left:1255px;top:562px;width:4px;height:4px;border-radius:50%;background:#c4c4c4"></div><div class="a" style="left:1260px;top:562px;width:4px;height:4px;border-radius:50%;background:#c4c4c4"></div><div class="a" style="left:1265px;top:562px;width:4px;height:4px;border-radius:50%;background:#c4c4c4"></div>
<div class="sep" style="left:1035px;top:577px;width:240px"></div>
<div class="lab" style="left:1045px;top:590px">Aufzählungszeichen und Nummerierung</div>
<svg class="a" style="left:1049px;top:614px" width="16" height="15"><circle cx="2.5" cy="3" r="2" fill="#cfcfcf"/><circle cx="2.5" cy="11" r="2" fill="#cfcfcf"/><path d="M6 1.5H15M6 4.5H15M6 9.5H15M6 12.5H15" stroke="#cfcfcf" stroke-width="1"/></svg>
<svg class="a" style="left:1081px;top:613px" width="17" height="17"><text x="0" y="8" font-size="7.5" font-family="Liberation Sans" fill="#cfcfcf">1</text><text x="0" y="16" font-size="7.5" font-family="Liberation Sans" fill="#cfcfcf">2</text><path d="M6 2.5H16M6 5.5H16M6 10.5H16M6 13.5H16" stroke="#cfcfcf" stroke-width="1"/></svg>
<div class="btn" style="left:1200px;top:610px;width:65px;height:20px;line-height:18px">Optionen</div>
<div class="sep" style="left:1035px;top:640px;width:240px"></div>
<div class="lab" style="left:1045px;top:649px">Schnellaktionen</div>
<div class="btn" style="left:1045px;top:668px;width:220px;height:21px;line-height:19px">Groß-/Kleinschreibung ändern</div>
<div class="btn" style="left:1045px;top:699px;width:105px;height:21px;line-height:19px">Neuer Hyperlink</div>
<div class="btn" style="left:1160px;top:699px;width:105px;height:21px;line-height:19px">Fußnote einfügen</div>
<div class="a" style="left:1045px;top:730px;width:220px;height:5px;border:1px solid #737373;border-bottom:none;border-radius:2px 2px 0 0"></div>
<div class="a" style="left:0;top:0;width:1px;height:739px;background:#d9d9d9"></div>
<div class="a" style="left:1px;top:0;width:1px;height:739px;background:#2e2e2e"></div>
<div class="a" style="left:1291px;top:0;width:1px;height:739px;background:#2e2e2e"></div>
<div class="a" style="left:1292px;top:0;width:1px;height:739px;background:#f0f0f0"></div>
<div class="a" style="left:46px;top:735px;width:1245px;height:1px;background:#3a3a3a"></div>
</body></html>
